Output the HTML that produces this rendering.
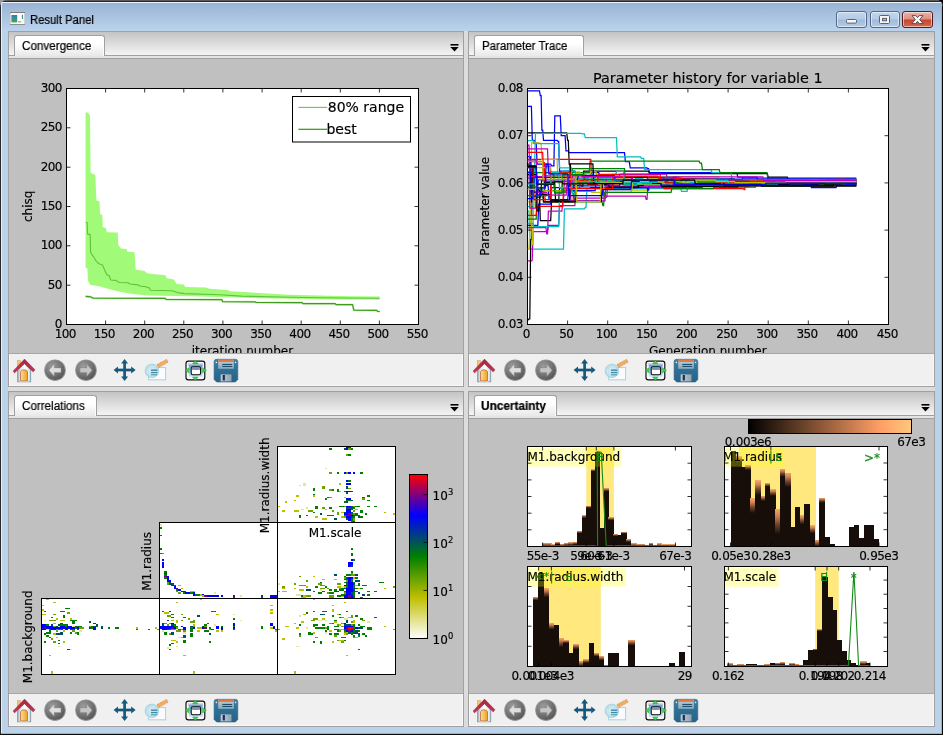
<!DOCTYPE html><html><head><meta charset="utf-8"><title>Result Panel</title><style>
html,body{margin:0;padding:0;background:#000;}
body{width:943px;height:735px;overflow:hidden;position:relative;font-family:"Liberation Sans",sans-serif;}
#win{position:absolute;left:0;top:0;width:943px;height:735px;box-sizing:border-box;
 background:linear-gradient(#97b2d3 0px,#99b4d4 3px,#bad2ec 30px,#bbd2ea 34px,#bbd2ea 100%);
 border-radius:7px 7px 0 0;overflow:hidden;}
#win .edge{position:absolute;}
.pane{position:absolute;box-sizing:border-box;border:1px solid #a0a0a0;background:#c0c0c0;overflow:hidden;}
.tabbar{position:absolute;left:0;top:0;right:0;height:23px;background:linear-gradient(#c4c4c4,#dcdcdc 50%,#f4f4f4);border-bottom:1px solid #a0a0a0;}
.strip{position:absolute;left:0;right:0;top:24px;height:2px;background:#e4e4e4;border-bottom:1px solid #a0a0a0;}
.tab{position:absolute;left:5px;top:3px;height:21px;box-sizing:border-box;border:1px solid #a0a0a0;border-bottom:none;border-radius:3px 3px 0 0;
 background:linear-gradient(#ffffff 0%,#ffffff 40%,#e8e8e8 100%);box-shadow:inset -1px 0 0 rgba(255,255,255,.8);font-size:12px;line-height:12px;color:#000;white-space:nowrap;}
.tab span{position:absolute;left:8px;top:4px;display:inline-block;transform-origin:0 50%;}
.dd{position:absolute;right:4px;top:12px;width:9px;height:8px;}
.tb{position:absolute;left:0;right:0;bottom:0;height:32px;background:#f0f0f0;border-top:1px solid #a6a6a6;box-shadow:inset -1px -1px 0 #f9f9f9,inset 1px 0 0 #f9f9f9;}
.cv{position:absolute;left:0;top:27px;will-change:transform;}
.tab span,#title{will-change:transform;-webkit-text-stroke:0.22px #000;}
svg text{font-family:"DejaVu Sans","Liberation Sans",sans-serif;stroke:#000;stroke-width:0.16px;}
svg text.g{stroke:#138c13;}
#title{position:absolute;left:30px;top:13px;transform:scaleX(0.94);font-size:12px;line-height:14px;color:#000;white-space:nowrap;transform-origin:0 50%;}
.cbtn{position:absolute;top:11px;height:17px;box-sizing:border-box;border:1px solid #56688a;border-radius:3px;
 box-shadow:inset 0 0 0 1px rgba(255,255,255,.55);}
</style></head><body>
<svg width="0" height="0" style="position:absolute"><defs>
<radialGradient id="gball" cx="0.36" cy="0.3" r="0.8"><stop offset="0" stop-color="#9b9b9b"/><stop offset="0.5" stop-color="#787878"/><stop offset="1" stop-color="#505050"/></radialGradient>
<linearGradient id="gdoor" x1="0" y1="0" x2="1" y2="0"><stop offset="0" stop-color="#fde08a"/><stop offset="1" stop-color="#eba127"/></linearGradient>
<linearGradient id="groof" x1="0" y1="0" x2="0" y2="1"><stop offset="0" stop-color="#a8243f"/><stop offset="1" stop-color="#c03a55"/></linearGradient>
<linearGradient id="gwall" x1="0" y1="0" x2="1" y2="0"><stop offset="0" stop-color="#a9b5bb"/><stop offset="0.3" stop-color="#e4e9eb"/><stop offset="0.55" stop-color="#ffffff"/><stop offset="1" stop-color="#d3dadd"/></linearGradient>
<linearGradient id="gsub" x1="0" y1="0" x2="0" y2="1"><stop offset="0" stop-color="#5f9fe6"/><stop offset="1" stop-color="#c4e2f8"/></linearGradient>
<linearGradient id="gsave" x1="0" y1="0" x2="0" y2="1"><stop offset="0" stop-color="#3f81a6"/><stop offset="0.45" stop-color="#2f6f95"/><stop offset="1" stop-color="#286288"/></linearGradient>
<linearGradient id="gslab" x1="0" y1="0" x2="0" y2="1"><stop offset="0" stop-color="#c3d0d6"/><stop offset="1" stop-color="#86a9bb"/></linearGradient>
<radialGradient id="gmag" cx="0.5" cy="0.5" r="0.5"><stop offset="0" stop-color="#d9eef5" stop-opacity="0.9"/><stop offset="0.7" stop-color="#c3e3ee" stop-opacity="0.88"/><stop offset="1" stop-color="#a2d2e0" stop-opacity="0.9"/></radialGradient>
<linearGradient id="gshut" x1="0" y1="0" x2="1" y2="0"><stop offset="0" stop-color="#c4ccd2"/><stop offset="1" stop-color="#8fa3b0"/></linearGradient>
</defs></svg>
<div style="position:absolute;left:0;top:0;width:5px;height:5px;background:#9c9c9c"></div>
<div id="win">
<div class="edge" style="left:0;top:0;width:943px;height:1px;background:#5c5c5c"></div>
<div class="edge" style="left:0;top:1px;width:943px;height:1px;background:#262626"></div>
<div class="edge" style="left:1px;top:2px;width:941px;height:1px;background:#eef4fb"></div>
<div class="edge" style="left:0;top:0;width:1px;height:735px;background:#2a2a2a"></div>
<div class="edge" style="left:1px;top:2px;width:1px;height:731px;background:#e4eefa"></div>
<div class="edge" style="left:941px;top:6px;width:1px;height:728px;background:#36d6f5"></div>
<div class="edge" style="left:942px;top:0;width:1px;height:735px;background:#0a0a0a"></div>
<div class="edge" style="left:1px;top:733px;width:941px;height:1px;background:#36d6f5"></div>
<div class="edge" style="left:0;top:734px;width:943px;height:1px;background:#0a0a0a"></div>
<svg style="position:absolute;left:10px;top:12px" width="15" height="13" viewBox="0 0 15 13">
<defs><linearGradient id="icg" x1="0" y1="0" x2="0" y2="1"><stop offset="0" stop-color="#3a78c2"/><stop offset="0.45" stop-color="#36928f"/><stop offset="1" stop-color="#37a85a"/></linearGradient></defs>
<rect x="0" y="0" width="15" height="13" fill="#fbfbfb"/>
<rect x="0" y="0" width="15" height="1" fill="#7c7c7c"/><rect x="0" y="12" width="15" height="1" fill="#8e8e8e"/>
<rect x="0" y="1" width="0.8" height="11" fill="#c9c9c9"/><rect x="14.2" y="1" width="0.8" height="11" fill="#c9c9c9"/>
<rect x="1.4" y="3" width="5.8" height="7.4" fill="url(#icg)"/><rect x="8" y="9" width="3.2" height="1.5" fill="#b3b3b3"/><rect x="11.9" y="2.8" width="1.1" height="4.2" fill="url(#icg)"/></svg>
<div id="title">Result Panel</div>
<div class="cbtn" style="left:836px;width:31px;background:linear-gradient(#c3d6ec 0%,#b4cbe6 48%,#9fbbdb 52%,#b3cae5 100%)"></div>
<div class="cbtn" style="left:870px;width:30px;background:linear-gradient(#c3d6ec 0%,#b4cbe6 48%,#9fbbdb 52%,#b3cae5 100%)"></div>
<div class="cbtn" style="left:902px;width:31px;border-color:#541a1f;background:linear-gradient(#eab3a5 0%,#dd8f7e 48%,#c6452a 52%,#d4694c 100%)"></div>
<svg style="position:absolute;left:836px;top:11px" width="97" height="17" viewBox="0 0 97 17">
<rect x="10.5" y="8.5" width="10" height="3.6" rx="1" fill="#f7f7f7" stroke="#5a6373" stroke-width="1"/>
<rect x="43.5" y="4.5" width="10" height="8" rx="1" fill="#f7f7f7" stroke="#5a6373" stroke-width="1"/>
<rect x="46.5" y="7.4" width="4" height="2.4" fill="#9fb6d4" stroke="#5a6373" stroke-width="1"/>
<path d="M76.0 4.6 L79.8 4.6 L81.5 6.7 L83.2 4.6 L87.0 4.6 L83.6 8.5 L87.2 12.6 L83.3 12.6 L81.5 10.4 L79.7 12.6 L75.8 12.6 L79.4 8.5 Z" fill="#fbfbfb" stroke="#5b3d42" stroke-width="0.9" stroke-linejoin="round"/>
</svg>
<div class="edge" style="left:464px;top:31px;width:4px;height:696px;background:#dcdcdc"></div>
<div class="edge" style="left:8px;top:387px;width:927px;height:4px;background:#dcdcdc"></div>
<div class="pane" style="left:8px;top:31px;width:456px;height:356px">
<div class="tabbar"></div><div class="strip"></div>
<div class="tab" style="width:91px"><span style="left:7.3px;transform:scaleX(0.972)">Convergence</span></div>
<svg class="dd" viewBox="0 0 9 8"><rect x="0.5" y="0" width="8" height="1.6" fill="#000"/><path d="M0.3 3 L8.7 3 L4.5 7.4 Z" fill="#000"/></svg>
<div class="cv" style="width:454px;height:295px"><svg width="454" height="294" viewBox="0 0 454 294" style="position:absolute;left:0;top:0;display:block" shape-rendering="auto"><g transform="translate(-9,-59)"><rect x="66.5" y="88.5" width="352.0" height="236.0" fill="#fff" stroke="#000" stroke-width="1"/><polygon points="85.6,112.6 87.0,112.2 88.4,113.6 90.0,115.4 90.6,172.7 95.3,174.9 96.4,200.4 99.4,201.0 100.2,214.2 102.4,215.0 102.8,226.9 105.9,228.0 106.8,232.3 117.7,232.6 118.3,244.9 121.1,248.6 126.6,248.9 127.1,251.6 134.6,252.3 135.6,269.5 144.3,271.0 147.3,273.3 156.2,274.4 165.0,275.0 166.8,278.2 173.9,279.4 176.7,284.0 183.8,284.4 185.2,286.9 205.8,287.6 209.3,288.8 227.0,289.9 230.5,291.2 248.2,292.3 262.4,293.3 290.0,294.7 320.0,295.6 350.0,296.2 379.6,296.5 379.6,299.8 350.0,299.5 320.0,299.2 290.0,298.8 262.0,298.2 227.0,297.2 191.6,296.2 160.0,295.7 144.3,295.3 129.3,293.5 117.4,291.2 106.2,288.2 97.9,286.0 90.5,284.9 87.9,280.7 87.4,268.6 85.6,267.8" fill="#a1fb79"/><polyline points="85.8,222.4 87.2,222.8 87.6,234.1 90.2,234.6 90.6,252.3 92.7,255.6 94.2,257.7 96.4,261.6 99.6,264.0 102.4,265.0 104.0,268.4 105.4,271.8 106.9,274.8 109.2,275.8 110.7,280.0 115.9,280.4 119.2,282.5 127.9,282.8 130.1,284.0 138.3,284.9 139.8,286.0 145.8,286.7 149.4,288.0 150.5,290.2 172.1,290.8 177.4,292.6 184.5,293.6 219.9,294.8 241.2,296.1 290.0,297.2 340.0,298.0 379.6,298.3" fill="none" stroke="#5fc33a" stroke-width="1.1" stroke-linejoin="round"/><polyline points="85.6,296.3 90.5,296.8 92.8,298.1 165.0,298.3 166.2,299.5 221.7,299.6 222.8,301.6 255.3,301.9 256.0,302.5 302.2,302.7 303.0,303.6 335.2,303.7 336.0,304.6 352.6,304.7 353.8,310.1 376.6,310.3 377.6,311.4 379.8,311.5" fill="none" stroke="#a4e487" stroke-width="2.4" stroke-linejoin="round" opacity="0.55"/><polyline points="85.6,296.3 90.5,296.8 92.8,298.1 165.0,298.3 166.2,299.5 221.7,299.6 222.8,301.6 255.3,301.9 256.0,302.5 302.2,302.7 303.0,303.6 335.2,303.7 336.0,304.6 352.6,304.7 353.8,310.1 376.6,310.3 377.6,311.4 379.8,311.5" fill="none" stroke="#3d9c1c" stroke-width="1.2" stroke-linejoin="round"/><path d="M105.6 324.5 v-4 M105.6 88.5 v4 M144.7 324.5 v-4 M144.7 88.5 v4 M183.8 324.5 v-4 M183.8 88.5 v4 M222.9 324.5 v-4 M222.9 88.5 v4 M262.1 324.5 v-4 M262.1 88.5 v4 M301.2 324.5 v-4 M301.2 88.5 v4 M340.3 324.5 v-4 M340.3 88.5 v4 M379.4 324.5 v-4 M379.4 88.5 v4 " stroke="#000" stroke-width="0.8" fill="none"/><path d="M66.5 285.2 h4 M418.5 285.2 h-4 M66.5 245.8 h4 M418.5 245.8 h-4 M66.5 206.5 h4 M418.5 206.5 h-4 M66.5 167.2 h4 M418.5 167.2 h-4 M66.5 127.8 h4 M418.5 127.8 h-4 " stroke="#000" stroke-width="0.8" fill="none"/><text x="65.5" y="337.8" font-size="12" text-anchor="middle" fill="#000" dx="0 -0.63 -0.63">100</text><text x="104.6" y="337.8" font-size="12" text-anchor="middle" fill="#000" dx="0 -0.63 -0.63">150</text><text x="143.7" y="337.8" font-size="12" text-anchor="middle" fill="#000" dx="0 -0.63 -0.63">200</text><text x="182.8" y="337.8" font-size="12" text-anchor="middle" fill="#000" dx="0 -0.63 -0.63">250</text><text x="221.9" y="337.8" font-size="12" text-anchor="middle" fill="#000" dx="0 -0.63 -0.63">300</text><text x="261.1" y="337.8" font-size="12" text-anchor="middle" fill="#000" dx="0 -0.63 -0.63">350</text><text x="300.2" y="337.8" font-size="12" text-anchor="middle" fill="#000" dx="0 -0.63 -0.63">400</text><text x="339.3" y="337.8" font-size="12" text-anchor="middle" fill="#000" dx="0 -0.63 -0.63">450</text><text x="378.4" y="337.8" font-size="12" text-anchor="middle" fill="#000" dx="0 -0.63 -0.63">500</text><text x="417.5" y="337.8" font-size="12" text-anchor="middle" fill="#000" dx="0 -0.63 -0.63">550</text><text x="62.4" y="328.1" font-size="12" text-anchor="end" fill="#000" dx="0">0</text><text x="62.4" y="288.8" font-size="12" text-anchor="end" fill="#000" dx="0 -0.63">50</text><text x="62.4" y="249.4" font-size="12" text-anchor="end" fill="#000" dx="0 -0.63 -0.63">100</text><text x="62.4" y="210.1" font-size="12" text-anchor="end" fill="#000" dx="0 -0.63 -0.63">150</text><text x="62.4" y="170.8" font-size="12" text-anchor="end" fill="#000" dx="0 -0.63 -0.63">200</text><text x="62.4" y="131.4" font-size="12" text-anchor="end" fill="#000" dx="0 -0.63 -0.63">250</text><text x="62.4" y="92.1" font-size="12" text-anchor="end" fill="#000" dx="0 -0.63 -0.63">300</text><text transform="translate(32.3,206.3) rotate(-90)" font-size="12" text-anchor="middle" fill="#000">chisq</text><text x="242.4" y="355.4" font-size="12" text-anchor="middle" fill="#000" >iteration number</text><rect x="292.5" y="96.5" width="118" height="45.5" fill="#fff" stroke="#000" stroke-width="1"/><path d="M298.4 107.4 H327.2" stroke="#63cf2c" stroke-width="1.1"/><path d="M298.4 129.3 H327.2" stroke="#2f9907" stroke-width="1.2"/><text x="327.8" y="111.8" font-size="14" text-anchor="start" fill="#000" >80% range</text><text x="326.4" y="133.8" font-size="14" text-anchor="start" fill="#000" >best</text></g></svg></div>
<div class="tb"><svg width="250" height="32" viewBox="0 0 250 32" style="position:absolute;left:0;top:0">
<g transform="translate(3.0,4.399999999999999)">
<rect x="5.4" y="2.2" width="3.0" height="6" fill="#f7c75f" stroke="#d8a081" stroke-width="0.6"/>
<path d="M5.6 11 L12.4 4.6 L18.6 11 L18.6 23.4 L5.6 23.4 Z" fill="url(#gwall)" stroke="#8fa5ae" stroke-width="1.1"/>
<path d="M8.5 22.6 L8.5 13.4 Q8.7 11.4 12.0 11.4 Q15.3 11.4 15.5 13.4 L15.5 22.6 Z" fill="none" stroke="#ffffff" stroke-width="1.6"/>
<path d="M8.5 22.6 L8.5 13.4 Q8.7 11.4 12.0 11.4 Q15.3 11.4 15.5 13.4 L15.5 22.6 Z" fill="url(#gdoor)" stroke="#b8664a" stroke-width="0.8"/>
<path d="M1.1 12.5 L12.5 0.7 L23.0 11.4 L21.2 13.5 L12.5 5.3 L2.5 14.5 Z" fill="url(#groof)" stroke="#9a1f3c" stroke-width="0.4" stroke-linejoin="round"/>
</g>
<circle cx="46" cy="16.2" r="10.8" fill="#969696"/>
<circle cx="46" cy="16.2" r="9.9" fill="url(#gball)"/>
<path d="M51.90 13.90 L45.20 13.90 L45.20 10.20 L39.90 16.20 L45.20 22.20 L45.20 18.50 L51.90 18.50 Z" fill="#dedede" stroke="#8d8d8d" stroke-width="0.4" stroke-linejoin="round"/>
<circle cx="77" cy="16.2" r="10.8" fill="#969696"/>
<circle cx="77" cy="16.2" r="9.9" fill="url(#gball)"/>
<path d="M71.10 13.90 L77.80 13.90 L77.80 10.20 L83.10 16.20 L77.80 22.20 L77.80 18.50 L71.10 18.50 Z" fill="#c4c4c4" stroke="#8d8d8d" stroke-width="0.4" stroke-linejoin="round"/>
<rect x="108.5" y="14.65" width="14.2" height="2.7" fill="#15587c"/><rect x="114.25" y="8.9" width="2.7" height="14.2" fill="#15587c"/><path d="M126.6 16.0 L122.19999999999999 19.5 L122.19999999999999 12.5 Z" fill="#15587c"/><path d="M104.6 16.0 L109.0 12.5 L109.0 19.5 Z" fill="#15587c"/><path d="M115.6 27.0 L119.1 22.6 L112.1 22.6 Z" fill="#15587c"/><path d="M115.6 5.0 L112.1 9.4 L119.1 9.4 Z" fill="#15587c"/>
<g transform="translate(135,4.199999999999999)">
<rect x="4.6" y="9.4" width="17.0" height="12.2" fill="#fbfbff" stroke="#a3d4e0" stroke-width="1"/>
<path d="M12.9 6.4 L22.6 1.2 L24.2 3.9 L14.6 9.4 Z" fill="#f3ad62" stroke="#cf8a3d" stroke-width="0.7" stroke-linejoin="round" stroke-dasharray="1.2 0.6"/>
<circle cx="7.9" cy="12.7" r="6.8" fill="url(#gmag)" stroke="#a9d5e2" stroke-width="0.9"/>
<rect x="6.9" y="11.3" width="6.4" height="1.3" fill="#2f819c"/>
<rect x="6.9" y="13.7" width="6.4" height="1.3" fill="#3d8ca6"/>
<rect x="6.9" y="15.9" width="6.4" height="1.3" fill="#5ea3b9"/>
</g>
<g transform="translate(174.4,4.0)">
<rect x="2.6" y="3.1" width="18.8" height="18.8" rx="2.4" fill="#fafafa" stroke="#0c0c0c" stroke-width="1.15"/>
<rect x="4.4" y="5.0" width="15.2" height="3" fill="#bdbdbd" opacity="0.55"/>
<rect x="5.5" y="6.6" width="13.7" height="12.1" fill="url(#gsub)"/>
<rect x="7.8" y="8.9" width="9.4" height="7.9" rx="1.6" fill="#fdfdfd" stroke="#0c0c0c" stroke-width="1.1"/>
<rect x="8.5" y="9.5" width="8.0" height="2.4" fill="#8f8f8f"/>
<rect x="11.2" y="9.5" width="2.2" height="2.4" fill="#6f8fdc"/>
<path d="M11.9 2.3 L14.7 5.9 L9.1 5.9 Z" fill="#35d64a" stroke="#1f9a2c" stroke-width="0.4"/>
<path d="M11.9 22.6 L14.7 19.0 L9.1 19.0 Z" fill="#35d64a" stroke="#1f9a2c" stroke-width="0.4"/>
<path d="M1.9 12.3 L5.5 9.7 L5.5 14.9 Z" fill="#35d64a" stroke="#1f9a2c" stroke-width="0.4"/>
<path d="M23.1 12.3 L19.2 9.7 L19.2 14.9 Z" fill="#35d64a" stroke="#1f9a2c" stroke-width="0.4"/>
</g>
<g transform="translate(204.8,4.599999999999998)">
<path d="M2.8 0.7 L21.6 0.7 Q24.0 0.7 24.0 3.1 L24.0 20.9 L21.6 23.4 L2.8 23.4 L0.3 20.9 L0.3 3.1 Q0.3 0.7 2.8 0.7 Z" fill="url(#gsave)" stroke="#2b678c" stroke-width="0.6"/>
<rect x="4.4" y="1.2" width="15.6" height="9.0" fill="url(#gslab)"/>
<rect x="4.4" y="1.2" width="15.6" height="2.1" fill="#d97a49"/>
<rect x="8.5" y="5.3" width="9.9" height="1.1" fill="#1f4d6c"/>
<rect x="8.5" y="7.3" width="9.9" height="1.1" fill="#1f4d6c"/>
<rect x="1.9" y="3.2" width="1.3" height="1.3" fill="#eef4f8"/><rect x="21.1" y="3.2" width="1.3" height="1.3" fill="#eef4f8"/>
<rect x="6.9" y="15.8" width="10.8" height="7.0" fill="url(#gshut)"/>
<rect x="8.9" y="16.4" width="2.2" height="5.4" fill="#1b2c55"/>
</g>
</svg></div>
</div>
<div class="pane" style="left:468px;top:31px;width:467px;height:356px">
<div class="tabbar"></div><div class="strip"></div>
<div class="tab" style="width:110px"><span style="left:6.6px;transform:scaleX(0.955)">Parameter Trace</span></div>
<svg class="dd" viewBox="0 0 9 8"><rect x="0.5" y="0" width="8" height="1.6" fill="#000"/><path d="M0.3 3 L8.7 3 L4.5 7.4 Z" fill="#000"/></svg>
<div class="cv" style="width:465px;height:295px"><svg width="465" height="294" viewBox="0 0 465 294" style="position:absolute;left:0;top:0;display:block" shape-rendering="auto"><g transform="translate(-469,-59)"><rect x="527.5" y="88.5" width="361.0" height="236.0" fill="#fff" stroke="#000" stroke-width="1"/><clipPath id="tclip"><rect x="527.5" y="88.5" width="361.0" height="236.0"/></clipPath><g clip-path="url(#tclip)" fill="none" stroke-width="1.25" stroke-linejoin="miter"><polyline points="527.5,90.9 537.8,90.9 538.7,90.9 539.5,90.9 540.3,95.6 541.1,95.6 541.9,130.0 542.7,130.0 543.5,140.4 557.1,140.4 558.0,141.4 558.7,141.4 559.6,171.1 574.8,171.1 575.6,172.5 598.8,172.5 599.7,177.2 647.0,177.2 647.8,179.1 695.9,179.1 696.8,180.3 744.9,180.3 745.8,181.5 856.4,181.5" stroke="#0000ff"/><polyline points="527.5,106.4 529.8,106.4 530.7,106.4 531.4,106.4 532.3,140.4 534.6,140.4 535.5,142.8 536.2,142.8 537.1,164.0 550.7,164.0 551.6,165.9 553.9,165.9 554.8,115.9 558.7,115.9 559.6,115.9 560.3,115.9 561.2,135.7 565.1,135.7 566.0,150.8 568.3,150.8 569.2,152.7 621.3,152.7 622.2,152.7 624.5,152.7 625.4,161.7 629.3,161.7 630.2,167.8 647.0,167.8 647.8,168.7 648.6,168.7 649.4,172.5 735.2,172.5 736.1,172.5 736.8,172.5 737.7,177.2 756.9,177.2 757.7,180.1 856.4,180.1" stroke="#0000ff"/><polyline points="527.5,132.9 565.1,132.9 566.0,132.9 566.7,132.9 567.6,140.4 568.3,140.4 569.2,164.0 569.9,164.0 570.8,185.3 581.2,185.3 582.1,186.7 582.8,186.7 583.7,171.1 647.0,171.1 647.8,171.1 648.6,171.1 649.4,173.5 767.3,173.5 768.2,177.2 787.3,177.2 788.2,179.6 856.4,179.6" stroke="#000000"/><polyline points="527.5,206.5 533.0,206.5 533.9,206.5 533.8,206.5 534.7,164.0 534.6,164.0 535.5,133.3 581.2,133.3 582.1,133.8 584.4,133.8 585.3,137.6 614.9,137.6 615.7,137.6 616.5,137.6 617.3,156.9 640.5,156.9 641.4,158.4 643.7,158.4 644.6,169.7 711.1,169.7 712.0,172.5 731.2,172.5 732.1,181.0 856.4,181.0" stroke="#00bfbf"/><polyline points="527.5,178.2 531.4,178.2 532.3,172.5 589.2,172.5 590.1,161.2 699.1,161.2 700.0,163.1 701.5,163.1 702.4,169.7 719.2,169.7 720.0,172.5 767.0,172.5 767.9,179.1 856.4,179.1" stroke="#008000"/><polyline points="527.5,159.3 589.2,159.3 590.1,159.3 590.8,159.3 591.7,183.8 622.9,183.8 623.8,184.8 655.0,184.8 655.9,187.6 702.1,187.6 703.0,186.0 749.3,186.0 750.1,184.3 856.4,184.3" stroke="#ff0000"/><polyline points="527.5,211.2 529.0,211.2 529.9,249.0 561.9,249.0 562.8,249.0 563.5,249.0 564.4,208.9 584.4,208.9 585.3,207.4 586.0,207.4 586.9,188.6 679.0,188.6 679.9,187.6 680.6,187.6 681.5,191.4 687.1,191.4 687.9,184.8 717.2,184.8 718.1,183.8 856.4,183.8" stroke="#00bfbf"/><polyline points="527.5,260.8 531.4,260.8 532.3,260.8 532.2,260.8 533.1,231.5 545.9,231.5 546.8,231.5 547.5,231.5 548.4,225.4 558.7,225.4 559.6,205.6 574.8,205.6 575.6,198.0 605.2,198.0 606.1,197.1 606.8,197.1 607.7,186.7 685.4,186.7 686.3,185.7 764.0,185.7 764.9,184.8 856.4,184.8" stroke="#bf00bf"/><polyline points="527.5,319.8 528.2,319.8 529.1,318.8 529.8,318.8 530.7,239.5 531.4,239.5 532.3,168.7 533.0,168.7 533.9,187.6 537.8,187.6 538.7,190.0 539.5,190.0 540.3,220.7 549.1,220.7 550.0,220.7 550.7,220.7 551.6,200.8 558.7,200.8 559.6,187.6 636.9,187.6 637.8,185.3 715.0,185.3 715.9,182.9 856.4,182.9" stroke="#000000"/><polyline points="527.5,249.0 529.0,249.0 529.9,230.1 530.6,230.1 531.5,142.8 539.5,142.8 540.3,143.3 541.1,143.3 541.9,159.3 555.5,159.3 556.4,159.3 557.1,159.3 558.0,182.9 570.7,182.9 571.6,191.4 590.8,191.4 591.7,192.3 630.9,192.3 631.8,190.0 647.0,190.0 647.8,183.8 701.7,183.8 702.5,183.1 756.4,183.1 757.2,182.4 856.4,182.4" stroke="#bfbf00"/><polyline points="527.5,148.9 545.9,148.9 546.8,148.9 547.5,148.9 548.4,173.5 566.7,173.5 567.6,178.2 602.8,178.2 603.7,196.1 645.3,196.1 646.2,199.4 647.0,199.4 647.8,187.6 682.7,187.6 683.6,185.7 718.4,185.7 719.3,183.8 856.4,183.8" stroke="#bf00bf"/><polyline points="527.5,161.7 542.7,161.7 543.5,162.6 544.3,162.6 545.1,201.8 571.5,201.8 572.4,201.8 573.1,201.8 574.0,180.5 598.8,180.5 599.7,181.5 663.0,181.5 663.9,188.6 743.2,188.6 744.1,189.5 744.8,189.5 745.7,182.9 764.9,182.9 765.8,182.0 856.4,182.0" stroke="#ff0000"/><polyline points="527.5,187.6 542.7,187.6 543.5,201.8 602.0,201.8 602.9,205.6 603.6,205.6 604.5,192.3 671.0,192.3 671.9,188.6 713.2,188.6 714.1,187.1 755.4,187.1 756.3,185.7 856.4,185.7" stroke="#008000"/><polyline points="527.5,225.4 536.2,225.4 537.1,226.3 537.8,226.3 538.7,204.1 550.7,204.1 551.6,187.6 647.0,187.6 647.8,190.0 648.6,190.0 649.4,182.9 723.0,182.9 723.8,183.4 797.4,183.4 798.2,183.8 856.4,183.8" stroke="#0000ff"/><polyline points="527.5,201.8 529.8,201.8 530.7,215.9 531.4,215.9 532.3,244.3 533.0,244.3 533.9,194.7 550.7,194.7 551.6,173.5 562.7,173.5 563.6,174.4 564.3,174.4 565.2,192.3 574.8,192.3 575.6,193.3 576.4,193.3 577.2,182.9 650.2,182.9 651.1,183.8 724.0,183.8 724.9,184.8 856.4,184.8" stroke="#bfbf00"/><polyline points="527.5,164.0 529.8,164.0 530.7,182.9 530.6,182.9 531.5,201.8 531.4,201.8 532.3,166.4 533.0,166.4 533.9,192.3 542.7,192.3 543.5,201.8 574.8,201.8 575.6,182.9 622.9,182.9 623.8,177.2 678.6,177.2 679.5,179.1 734.4,179.1 735.3,181.0 856.4,181.0" stroke="#000000"/><polyline points="527.5,227.7 544.3,227.7 545.1,227.7 545.9,227.7 546.8,233.9 547.5,233.9 548.4,211.2 561.9,211.2 562.8,201.8 563.5,201.8 564.4,179.1 630.9,179.1 631.8,178.2 632.5,178.2 633.4,183.8 704.5,183.8 705.4,183.6 776.6,183.6 777.4,183.4 856.4,183.4" stroke="#bf00bf"/><polyline points="527.5,156.5 530.6,156.5 531.5,191.0 533.1,191.0 534.0,192.0 543.4,192.0 544.3,185.6 548.1,185.6 549.0,199.5 567.8,199.5 568.6,185.8 619.3,185.8 620.2,183.6 650.8,183.6 651.7,183.9 705.9,183.9 706.8,182.7 774.8,182.7 775.6,182.5 783.4,182.5 784.2,184.3 818.7,184.3 819.5,183.5 856.4,183.5" stroke="#0000ff"/><polyline points="527.5,219.0 536.2,219.0 537.1,188.4 543.3,188.4 544.2,190.6 571.5,190.6 572.4,168.7 624.5,168.7 625.4,182.4 656.8,182.4 657.7,179.9 679.5,179.9 680.4,180.7 696.1,180.7 697.0,184.3 740.4,184.3 741.3,182.0 771.4,182.0 772.3,182.7 785.6,182.7 786.5,182.6 821.1,182.6 822.0,183.2 856.4,183.2" stroke="#008000"/><polyline points="527.5,152.3 542.7,152.3 543.5,175.8 584.8,175.8 585.7,177.3 623.4,177.3 624.3,183.2 636.3,183.2 637.1,184.1 656.8,184.1 657.7,182.7 662.5,182.7 663.4,178.7 685.7,178.7 686.6,184.4 749.6,184.4 750.4,181.4 829.4,181.4 830.3,181.5 856.4,181.5" stroke="#ff0000"/><polyline points="527.5,223.3 533.0,223.3 533.9,226.7 558.7,226.7 559.6,192.8 561.9,192.8 562.8,171.2 575.1,171.2 576.0,187.4 589.5,187.4 590.4,174.6 593.5,174.6 594.4,180.0 634.3,180.0 635.2,178.7 642.8,178.7 643.7,185.3 664.1,185.3 664.9,178.3 669.9,178.3 670.8,180.0 685.9,180.0 686.8,179.5 696.5,179.5 697.4,179.7 714.3,179.7 715.1,183.3 785.2,183.3 786.1,181.8 820.7,181.8 821.6,180.4 837.0,180.4 837.9,180.5 856.4,180.5" stroke="#00bfbf"/><polyline points="527.5,172.2 529.0,172.2 529.9,208.0 535.6,208.0 536.5,179.5 542.6,179.5 543.5,166.2 550.1,166.2 551.0,181.3 570.1,181.3 570.9,200.8 605.0,200.8 605.9,186.1 670.5,186.1 671.4,184.2 730.5,184.2 731.4,181.8 805.6,181.8 806.4,179.5 856.4,179.5" stroke="#bf00bf"/><polyline points="527.5,167.7 550.7,167.7 551.6,176.6 562.7,176.6 563.6,189.6 576.0,189.6 576.8,171.8 579.6,171.8 580.5,174.3 585.8,174.3 586.7,176.4 592.3,176.4 593.2,178.7 596.3,178.7 597.2,181.2 600.5,181.2 601.4,179.0 628.8,179.0 629.7,179.5 642.1,179.5 643.0,179.4 677.4,179.4 678.2,176.9 718.5,176.9 719.4,179.9 747.4,179.9 748.2,179.8 768.5,179.8 769.4,179.6 824.8,179.6 825.7,180.7 856.4,180.7" stroke="#bfbf00"/><polyline points="527.5,174.7 536.2,174.7 537.1,197.1 540.7,197.1 541.5,180.8 543.4,180.8 544.3,182.5 554.7,182.5 555.6,201.4 601.4,201.4 602.2,184.5 608.5,184.5 609.4,187.1 638.2,187.1 639.1,185.1 643.4,185.1 644.3,179.6 723.3,179.6 724.1,185.9 833.1,185.9 834.0,183.0 843.2,183.0 844.0,182.8 856.4,182.8" stroke="#000000"/><polyline points="527.5,198.5 533.0,198.5 533.9,177.4 571.5,177.4 572.4,190.5 595.1,190.5 596.0,182.3 656.8,182.3 657.7,179.2 741.8,179.2 742.7,178.2 856.4,178.2" stroke="#0000ff"/><polyline points="527.5,186.8 536.2,186.8 537.1,184.4 553.9,184.4 554.8,192.0 566.2,192.0 567.1,185.0 569.6,185.0 570.5,182.0 621.9,182.0 622.8,184.1 669.8,184.1 670.6,182.3 709.7,182.3 710.5,182.2 779.5,182.2 780.4,184.0 802.8,184.0 803.7,182.7 818.3,182.7 819.2,183.9 828.0,183.9 828.9,183.6 844.6,183.6 845.4,183.0 856.4,183.0" stroke="#008000"/><polyline points="527.5,215.3 536.2,215.3 537.1,206.4 562.7,206.4 563.6,188.6 612.4,188.6 613.2,176.2 657.9,176.2 658.7,179.3 714.7,179.3 715.6,179.9 821.4,179.9 822.3,180.1 856.4,180.1" stroke="#ff0000"/><polyline points="527.5,140.6 533.0,140.6 533.9,143.5 558.7,143.5 559.6,167.8 571.5,167.8 572.4,194.2 575.1,194.2 576.0,178.2 611.3,178.2 612.1,174.3 615.8,174.3 616.7,171.3 623.5,171.3 624.4,184.1 671.8,184.1 672.7,182.1 681.8,182.1 682.7,182.7 707.0,182.7 707.9,182.3 776.2,182.3 777.0,180.5 833.8,180.5 834.7,181.3 856.4,181.3" stroke="#00bfbf"/><polyline points="527.5,145.2 529.0,145.2 529.9,176.6 545.5,176.6 546.4,181.4 588.6,181.4 589.5,184.6 595.2,184.6 596.1,179.7 606.2,179.7 607.1,184.0 613.6,184.0 614.4,182.1 644.1,182.1 645.0,179.6 658.3,179.6 659.2,181.5 667.8,181.5 668.7,179.4 673.8,179.4 674.7,180.0 698.1,180.0 699.0,182.1 765.1,182.1 765.9,183.5 798.5,183.5 799.4,182.5 856.4,182.5" stroke="#bf00bf"/><polyline points="527.5,161.1 542.7,161.1 543.5,190.9 561.4,190.9 562.3,171.5 566.8,171.5 567.7,181.1 589.6,181.1 590.5,171.9 596.2,171.9 597.1,182.1 603.1,182.1 604.0,189.5 631.9,189.5 632.8,181.5 637.0,181.5 637.9,183.8 671.4,183.8 672.3,180.4 695.5,180.4 696.4,182.1 739.7,182.1 740.6,182.8 747.4,182.8 748.3,182.3 856.4,182.3" stroke="#bfbf00"/><polyline points="527.5,165.8 536.2,165.8 537.1,210.9 538.9,210.9 539.8,194.6 549.7,194.6 550.6,200.1 569.6,200.1 570.5,163.9 592.9,163.9 593.7,183.0 619.9,183.0 620.8,181.7 651.5,181.7 652.4,183.4 660.8,183.4 661.6,186.5 718.4,186.5 719.2,186.9 737.6,186.9 738.4,184.7 788.8,184.7 789.6,183.8 824.6,183.8 825.5,184.8 841.0,184.8 841.9,185.2 856.4,185.2" stroke="#000000"/><polyline points="527.5,172.3 530.6,172.3 531.5,196.4 537.3,196.4 538.2,179.5 577.4,179.5 578.3,175.3 614.2,175.3 615.1,179.9 660.2,179.9 661.0,185.0 669.7,185.0 670.6,185.3 693.7,185.3 694.5,183.7 720.0,183.7 720.9,181.3 749.0,181.3 749.8,183.5 762.2,183.5 763.1,183.0 776.1,183.0 777.0,185.4 810.6,185.4 811.5,187.7 836.0,187.7 836.9,185.3 846.1,185.3 847.0,184.0 856.4,184.0" stroke="#0000ff"/><polyline points="527.5,195.7 550.7,195.7 551.6,174.1 553.7,174.1 554.6,193.2 561.9,193.2 562.8,174.6 583.8,174.6 584.7,179.6 641.4,179.6 642.3,182.9 650.2,182.9 651.1,181.6 664.9,181.6 665.7,182.8 680.5,182.8 681.4,179.9 697.2,179.9 698.0,182.0 797.2,182.0 798.1,181.8 856.4,181.8" stroke="#008000"/><polyline points="527.5,166.7 533.0,166.7 533.9,199.6 550.1,199.6 551.0,172.2 570.1,172.2 571.0,188.4 579.4,188.4 580.3,180.7 583.2,180.7 584.0,179.6 587.0,179.6 587.9,184.6 597.4,184.6 598.3,174.3 660.1,174.3 661.0,182.0 675.4,182.0 676.3,178.0 681.5,178.0 682.4,179.3 698.3,179.3 699.1,179.9 716.1,179.9 717.0,182.0 763.7,182.0 764.6,183.1 819.3,183.1 820.2,179.8 835.5,179.8 836.4,179.3 845.7,179.3 846.5,180.5 856.4,180.5" stroke="#ff0000"/><polyline points="527.5,183.9 550.7,183.9 551.6,172.5 558.7,172.5 559.6,187.5 571.5,187.5 572.4,181.5 595.1,181.5 596.0,182.3 656.8,182.3 657.7,181.8 662.5,181.8 663.4,179.9 668.3,179.9 669.2,180.4 727.8,180.4 728.7,183.8 777.4,183.8 778.3,180.5 812.1,180.5 813.0,180.4 856.4,180.4" stroke="#00bfbf"/><polyline points="527.5,159.8 536.2,159.8 537.1,192.7 546.8,192.7 547.7,195.1 566.2,195.1 567.1,183.2 571.9,183.2 572.8,175.6 581.3,175.6 582.2,176.5 619.1,176.5 620.0,174.1 666.3,174.1 667.2,177.3 672.2,177.3 673.1,176.8 762.9,176.8 763.7,180.6 846.0,180.6 846.9,180.6 856.4,180.6" stroke="#bf00bf"/><polyline points="527.5,189.4 536.2,189.4 537.1,179.2 576.0,179.2 576.8,201.6 600.2,201.6 601.1,182.1 607.3,182.1 608.2,182.1 614.7,182.1 615.6,182.7 622.4,182.7 623.2,181.7 635.2,181.7 636.0,181.4 648.8,181.4 649.7,178.8 657.9,178.8 658.8,182.1 663.6,182.1 664.5,180.0 679.1,180.0 680.0,182.0 689.5,182.0 690.4,180.1 715.4,180.1 716.3,181.6 734.4,181.6 735.3,182.5 785.1,182.5 786.0,181.7 856.4,181.7" stroke="#bfbf00"/><polyline points="527.5,166.3 536.2,166.3 537.1,184.0 553.9,184.0 554.8,181.9 562.1,181.9 563.0,183.8 595.1,183.8 596.0,183.6 622.5,183.6 623.4,180.0 694.6,180.0 695.5,184.4 760.7,184.4 761.5,186.0 856.4,186.0" stroke="#000000"/><polyline points="527.5,167.6 536.2,167.6 537.1,194.9 540.7,194.9 541.5,187.8 545.3,187.8 546.1,164.2 548.1,164.2 549.0,173.8 567.8,173.8 568.6,195.7 602.1,195.7 603.0,189.7 630.7,189.7 631.6,181.3 639.1,181.3 640.0,179.6 673.9,179.6 674.8,184.8 765.2,184.8 766.1,183.2 856.4,183.2" stroke="#0000ff"/></g><path d="M567.6 324.5 v-4 M567.6 88.5 v4 M607.7 324.5 v-4 M607.7 88.5 v4 M647.8 324.5 v-4 M647.8 88.5 v4 M687.9 324.5 v-4 M687.9 88.5 v4 M728.1 324.5 v-4 M728.1 88.5 v4 M768.2 324.5 v-4 M768.2 88.5 v4 M808.3 324.5 v-4 M808.3 88.5 v4 M848.4 324.5 v-4 M848.4 88.5 v4 " stroke="#000" stroke-width="0.8" fill="none"/><path d="M527.5 277.3 h4 M888.5 277.3 h-4 M527.5 230.1 h4 M888.5 230.1 h-4 M527.5 182.9 h4 M888.5 182.9 h-4 M527.5 135.7 h4 M888.5 135.7 h-4 " stroke="#000" stroke-width="0.8" fill="none"/><text x="526.5" y="337.8" font-size="12" text-anchor="middle" fill="#000" dx="0">0</text><text x="566.6" y="337.8" font-size="12" text-anchor="middle" fill="#000" dx="0 -0.63">50</text><text x="606.7" y="337.8" font-size="12" text-anchor="middle" fill="#000" dx="0 -0.63 -0.63">100</text><text x="646.8" y="337.8" font-size="12" text-anchor="middle" fill="#000" dx="0 -0.63 -0.63">150</text><text x="686.9" y="337.8" font-size="12" text-anchor="middle" fill="#000" dx="0 -0.63 -0.63">200</text><text x="727.1" y="337.8" font-size="12" text-anchor="middle" fill="#000" dx="0 -0.63 -0.63">250</text><text x="767.2" y="337.8" font-size="12" text-anchor="middle" fill="#000" dx="0 -0.63 -0.63">300</text><text x="807.3" y="337.8" font-size="12" text-anchor="middle" fill="#000" dx="0 -0.63 -0.63">350</text><text x="847.4" y="337.8" font-size="12" text-anchor="middle" fill="#000" dx="0 -0.63 -0.63">400</text><text x="887.5" y="337.8" font-size="12" text-anchor="middle" fill="#000" dx="0 -0.63 -0.63">450</text><text x="523.4" y="328.1" font-size="12" text-anchor="end" fill="#000" dx="0 -0.63 0.19 -0.63">0.03</text><text x="523.4" y="280.9" font-size="12" text-anchor="end" fill="#000" dx="0 -0.63 0.19 -0.63">0.04</text><text x="523.4" y="233.7" font-size="12" text-anchor="end" fill="#000" dx="0 -0.63 0.19 -0.63">0.05</text><text x="523.4" y="186.5" font-size="12" text-anchor="end" fill="#000" dx="0 -0.63 0.19 -0.63">0.06</text><text x="523.4" y="139.3" font-size="12" text-anchor="end" fill="#000" dx="0 -0.63 0.19 -0.63">0.07</text><text x="523.4" y="92.1" font-size="12" text-anchor="end" fill="#000" dx="0 -0.63 0.19 -0.63">0.08</text><text transform="translate(489.3,206.3) rotate(-90)" font-size="12" text-anchor="middle" fill="#000">Parameter value</text><text x="707.8" y="355.4" font-size="12" text-anchor="middle" fill="#000" >Generation number</text><text x="707.8" y="83.3" font-size="14.4" text-anchor="middle" fill="#000" >Parameter history for variable 1</text></g></svg></div>
<div class="tb"><svg width="250" height="32" viewBox="0 0 250 32" style="position:absolute;left:0;top:0">
<g transform="translate(3.0,4.399999999999999)">
<rect x="5.4" y="2.2" width="3.0" height="6" fill="#f7c75f" stroke="#d8a081" stroke-width="0.6"/>
<path d="M5.6 11 L12.4 4.6 L18.6 11 L18.6 23.4 L5.6 23.4 Z" fill="url(#gwall)" stroke="#8fa5ae" stroke-width="1.1"/>
<path d="M8.5 22.6 L8.5 13.4 Q8.7 11.4 12.0 11.4 Q15.3 11.4 15.5 13.4 L15.5 22.6 Z" fill="none" stroke="#ffffff" stroke-width="1.6"/>
<path d="M8.5 22.6 L8.5 13.4 Q8.7 11.4 12.0 11.4 Q15.3 11.4 15.5 13.4 L15.5 22.6 Z" fill="url(#gdoor)" stroke="#b8664a" stroke-width="0.8"/>
<path d="M1.1 12.5 L12.5 0.7 L23.0 11.4 L21.2 13.5 L12.5 5.3 L2.5 14.5 Z" fill="url(#groof)" stroke="#9a1f3c" stroke-width="0.4" stroke-linejoin="round"/>
</g>
<circle cx="46" cy="16.2" r="10.8" fill="#969696"/>
<circle cx="46" cy="16.2" r="9.9" fill="url(#gball)"/>
<path d="M51.90 13.90 L45.20 13.90 L45.20 10.20 L39.90 16.20 L45.20 22.20 L45.20 18.50 L51.90 18.50 Z" fill="#dedede" stroke="#8d8d8d" stroke-width="0.4" stroke-linejoin="round"/>
<circle cx="77" cy="16.2" r="10.8" fill="#969696"/>
<circle cx="77" cy="16.2" r="9.9" fill="url(#gball)"/>
<path d="M71.10 13.90 L77.80 13.90 L77.80 10.20 L83.10 16.20 L77.80 22.20 L77.80 18.50 L71.10 18.50 Z" fill="#c4c4c4" stroke="#8d8d8d" stroke-width="0.4" stroke-linejoin="round"/>
<rect x="108.5" y="14.65" width="14.2" height="2.7" fill="#15587c"/><rect x="114.25" y="8.9" width="2.7" height="14.2" fill="#15587c"/><path d="M126.6 16.0 L122.19999999999999 19.5 L122.19999999999999 12.5 Z" fill="#15587c"/><path d="M104.6 16.0 L109.0 12.5 L109.0 19.5 Z" fill="#15587c"/><path d="M115.6 27.0 L119.1 22.6 L112.1 22.6 Z" fill="#15587c"/><path d="M115.6 5.0 L112.1 9.4 L119.1 9.4 Z" fill="#15587c"/>
<g transform="translate(135,4.199999999999999)">
<rect x="4.6" y="9.4" width="17.0" height="12.2" fill="#fbfbff" stroke="#a3d4e0" stroke-width="1"/>
<path d="M12.9 6.4 L22.6 1.2 L24.2 3.9 L14.6 9.4 Z" fill="#f3ad62" stroke="#cf8a3d" stroke-width="0.7" stroke-linejoin="round" stroke-dasharray="1.2 0.6"/>
<circle cx="7.9" cy="12.7" r="6.8" fill="url(#gmag)" stroke="#a9d5e2" stroke-width="0.9"/>
<rect x="6.9" y="11.3" width="6.4" height="1.3" fill="#2f819c"/>
<rect x="6.9" y="13.7" width="6.4" height="1.3" fill="#3d8ca6"/>
<rect x="6.9" y="15.9" width="6.4" height="1.3" fill="#5ea3b9"/>
</g>
<g transform="translate(174.4,4.0)">
<rect x="2.6" y="3.1" width="18.8" height="18.8" rx="2.4" fill="#fafafa" stroke="#0c0c0c" stroke-width="1.15"/>
<rect x="4.4" y="5.0" width="15.2" height="3" fill="#bdbdbd" opacity="0.55"/>
<rect x="5.5" y="6.6" width="13.7" height="12.1" fill="url(#gsub)"/>
<rect x="7.8" y="8.9" width="9.4" height="7.9" rx="1.6" fill="#fdfdfd" stroke="#0c0c0c" stroke-width="1.1"/>
<rect x="8.5" y="9.5" width="8.0" height="2.4" fill="#8f8f8f"/>
<rect x="11.2" y="9.5" width="2.2" height="2.4" fill="#6f8fdc"/>
<path d="M11.9 2.3 L14.7 5.9 L9.1 5.9 Z" fill="#35d64a" stroke="#1f9a2c" stroke-width="0.4"/>
<path d="M11.9 22.6 L14.7 19.0 L9.1 19.0 Z" fill="#35d64a" stroke="#1f9a2c" stroke-width="0.4"/>
<path d="M1.9 12.3 L5.5 9.7 L5.5 14.9 Z" fill="#35d64a" stroke="#1f9a2c" stroke-width="0.4"/>
<path d="M23.1 12.3 L19.2 9.7 L19.2 14.9 Z" fill="#35d64a" stroke="#1f9a2c" stroke-width="0.4"/>
</g>
<g transform="translate(204.8,4.599999999999998)">
<path d="M2.8 0.7 L21.6 0.7 Q24.0 0.7 24.0 3.1 L24.0 20.9 L21.6 23.4 L2.8 23.4 L0.3 20.9 L0.3 3.1 Q0.3 0.7 2.8 0.7 Z" fill="url(#gsave)" stroke="#2b678c" stroke-width="0.6"/>
<rect x="4.4" y="1.2" width="15.6" height="9.0" fill="url(#gslab)"/>
<rect x="4.4" y="1.2" width="15.6" height="2.1" fill="#d97a49"/>
<rect x="8.5" y="5.3" width="9.9" height="1.1" fill="#1f4d6c"/>
<rect x="8.5" y="7.3" width="9.9" height="1.1" fill="#1f4d6c"/>
<rect x="1.9" y="3.2" width="1.3" height="1.3" fill="#eef4f8"/><rect x="21.1" y="3.2" width="1.3" height="1.3" fill="#eef4f8"/>
<rect x="6.9" y="15.8" width="10.8" height="7.0" fill="url(#gshut)"/>
<rect x="8.9" y="16.4" width="2.2" height="5.4" fill="#1b2c55"/>
</g>
</svg></div>
</div>
<div class="pane" style="left:8px;top:391px;width:456px;height:336px">
<div class="tabbar"></div><div class="strip"></div>
<div class="tab" style="width:83px"><span style="left:7.1px;transform:scaleX(0.97)">Correlations</span></div>
<svg class="dd" viewBox="0 0 9 8"><rect x="0.5" y="0" width="8" height="1.6" fill="#000"/><path d="M0.3 3 L8.7 3 L4.5 7.4 Z" fill="#000"/></svg>
<div class="cv" style="width:454px;height:275px"><svg width="454" height="274" viewBox="0 0 454 274" style="position:absolute;left:0;top:0;display:block" shape-rendering="auto"><g transform="translate(-9,-419)"><rect x="277.5" y="446.5" width="118" height="76" fill="#fff"/><g shape-rendering="crispEdges"><rect x="324.70" y="467.78" width="2.41" height="1.57" fill="#e6e699"/><rect x="298.74" y="484.50" width="2.41" height="1.57" fill="#e6e699"/><rect x="303.46" y="482.98" width="2.41" height="1.57" fill="#e6e699"/><rect x="303.46" y="484.50" width="2.41" height="1.57" fill="#e6e699"/><rect x="312.90" y="487.54" width="2.41" height="1.57" fill="#008000"/><rect x="312.90" y="489.06" width="2.41" height="1.57" fill="#008000"/><rect x="322.34" y="486.02" width="2.41" height="1.57" fill="#6ba300"/><rect x="322.34" y="487.54" width="2.41" height="1.57" fill="#6ba300"/><rect x="329.42" y="489.06" width="2.41" height="1.57" fill="#6ba300"/><rect x="331.78" y="489.06" width="2.41" height="1.57" fill="#008000"/><rect x="336.50" y="489.06" width="2.41" height="1.57" fill="#008000"/><rect x="336.50" y="490.58" width="2.41" height="1.57" fill="#008000"/><rect x="338.86" y="490.58" width="2.41" height="1.57" fill="#bfbf00"/><rect x="296.38" y="495.14" width="2.41" height="1.57" fill="#bfbf00"/><rect x="312.90" y="493.62" width="2.41" height="1.57" fill="#008000"/><rect x="312.90" y="495.14" width="2.41" height="1.57" fill="#bfbf00"/><rect x="284.58" y="501.22" width="2.41" height="1.57" fill="#bfbf00"/><rect x="294.02" y="499.70" width="2.41" height="1.57" fill="#bfbf00"/><rect x="327.06" y="496.66" width="2.41" height="1.57" fill="#008000"/><rect x="324.70" y="498.18" width="2.41" height="1.57" fill="#008000"/><rect x="329.42" y="496.66" width="2.41" height="1.57" fill="#6ba300"/><rect x="277.50" y="505.78" width="2.41" height="1.57" fill="#bfbf00"/><rect x="282.22" y="510.34" width="2.41" height="1.57" fill="#bfbf00"/><rect x="294.02" y="510.34" width="2.41" height="1.57" fill="#bfbf00"/><rect x="296.38" y="510.34" width="2.41" height="1.57" fill="#bfbf00"/><rect x="301.10" y="508.82" width="2.41" height="1.57" fill="#e6e699"/><rect x="308.18" y="510.34" width="2.41" height="1.57" fill="#6ba300"/><rect x="310.54" y="510.34" width="2.41" height="1.57" fill="#6ba300"/><rect x="315.26" y="505.78" width="2.41" height="1.57" fill="#008000"/><rect x="315.26" y="507.30" width="2.41" height="1.57" fill="#008000"/><rect x="312.90" y="511.86" width="2.41" height="1.57" fill="#008000"/><rect x="298.74" y="514.90" width="2.41" height="1.57" fill="#008000"/><rect x="298.74" y="516.42" width="2.41" height="1.57" fill="#008000"/><rect x="305.82" y="514.90" width="2.41" height="1.57" fill="#008000"/><rect x="322.34" y="507.30" width="2.41" height="1.57" fill="#6ba300"/><rect x="324.70" y="508.82" width="2.41" height="1.57" fill="#bfbf00"/><rect x="319.98" y="513.38" width="2.41" height="1.57" fill="#004d66"/><rect x="327.06" y="514.90" width="2.41" height="1.57" fill="#008000"/><rect x="329.42" y="514.90" width="2.41" height="1.57" fill="#008000"/><rect x="322.34" y="517.94" width="2.41" height="1.57" fill="#bfbf00"/><rect x="324.70" y="517.94" width="2.41" height="1.57" fill="#bfbf00"/><rect x="331.78" y="514.90" width="2.41" height="1.57" fill="#008000"/><rect x="334.14" y="517.94" width="2.41" height="1.57" fill="#004d66"/><rect x="336.50" y="511.86" width="2.41" height="1.57" fill="#6ba300"/><rect x="336.50" y="513.38" width="2.41" height="1.57" fill="#6ba300"/><rect x="338.86" y="505.78" width="2.41" height="1.57" fill="#008000"/><rect x="341.22" y="505.78" width="2.41" height="1.57" fill="#008000"/><rect x="341.22" y="511.86" width="2.41" height="1.57" fill="#bfbf00"/><rect x="338.86" y="482.98" width="2.41" height="1.57" fill="#bfbf00"/><rect x="343.58" y="496.66" width="2.41" height="1.57" fill="#bfbf00"/><rect x="357.74" y="505.78" width="2.41" height="1.57" fill="#008000"/><rect x="355.38" y="505.78" width="2.41" height="1.57" fill="#008000"/><rect x="360.10" y="510.34" width="2.41" height="1.57" fill="#008000"/><rect x="360.10" y="511.86" width="2.41" height="1.57" fill="#008000"/><rect x="362.46" y="496.66" width="2.41" height="1.57" fill="#008000"/><rect x="362.46" y="498.18" width="2.41" height="1.57" fill="#6ba300"/><rect x="367.18" y="495.14" width="2.41" height="1.57" fill="#008000"/><rect x="367.18" y="499.70" width="2.41" height="1.57" fill="#008000"/><rect x="367.18" y="505.78" width="2.41" height="1.57" fill="#008000"/><rect x="374.26" y="505.78" width="2.41" height="1.57" fill="#008000"/><rect x="383.70" y="511.86" width="2.41" height="1.57" fill="#bfbf00"/><rect x="393.14" y="513.38" width="2.41" height="1.57" fill="#bfbf00"/><rect x="364.82" y="513.38" width="2.41" height="1.57" fill="#008000"/><rect x="357.74" y="514.90" width="2.41" height="1.57" fill="#008000"/><rect x="360.10" y="516.42" width="2.41" height="1.57" fill="#008000"/><rect x="355.38" y="508.82" width="2.41" height="1.57" fill="#bfbf00"/><rect x="329.42" y="507.30" width="2.41" height="1.57" fill="#008000"/><rect x="331.78" y="510.34" width="2.41" height="1.57" fill="#6ba300"/><rect x="315.26" y="516.42" width="2.41" height="1.57" fill="#bfbf00"/><rect x="305.82" y="507.30" width="2.41" height="1.57" fill="#e6e699"/><rect x="329.42" y="472.34" width="2.41" height="1.57" fill="#6ba300"/><rect x="336.50" y="472.34" width="2.41" height="1.57" fill="#008000"/><rect x="343.58" y="472.34" width="2.41" height="1.57" fill="#0000ff"/><rect x="345.94" y="472.34" width="2.41" height="1.57" fill="#6ba300"/><rect x="348.30" y="472.34" width="2.41" height="1.57" fill="#0000ff"/><rect x="353.02" y="472.34" width="2.41" height="1.57" fill="#0000ff"/><rect x="360.10" y="472.34" width="2.41" height="1.57" fill="#008000"/><rect x="329.42" y="448.02" width="2.41" height="1.57" fill="#008000"/><rect x="343.58" y="448.02" width="2.41" height="1.57" fill="#004d66"/><rect x="345.94" y="448.02" width="2.41" height="1.57" fill="#0000ff"/><rect x="348.30" y="448.02" width="2.41" height="1.57" fill="#6ba300"/><rect x="350.66" y="448.02" width="2.41" height="1.57" fill="#008000"/><rect x="345.94" y="446.50" width="2.41" height="1.57" fill="#0000ff"/><rect x="348.30" y="446.50" width="2.41" height="1.57" fill="#004d66"/><rect x="345.94" y="454.10" width="2.41" height="1.57" fill="#6ba300"/><rect x="348.30" y="454.10" width="2.41" height="1.57" fill="#008000"/><rect x="345.94" y="479.94" width="2.41" height="1.57" fill="#0000ff"/><rect x="348.30" y="479.94" width="2.41" height="1.57" fill="#008000"/><rect x="345.94" y="482.98" width="2.41" height="1.57" fill="#0000ff"/><rect x="348.30" y="482.98" width="2.41" height="1.57" fill="#0000ff"/><rect x="345.94" y="486.02" width="2.41" height="1.57" fill="#004d66"/><rect x="348.30" y="487.54" width="2.41" height="1.57" fill="#6ba300"/><rect x="345.94" y="487.54" width="2.41" height="1.57" fill="#004d66"/><rect x="343.58" y="490.58" width="2.41" height="1.57" fill="#008000"/><rect x="345.94" y="490.58" width="2.41" height="1.57" fill="#0000ff"/><rect x="348.30" y="490.58" width="2.41" height="1.57" fill="#0000ff"/><rect x="350.66" y="490.58" width="2.41" height="1.57" fill="#004d66"/><rect x="345.94" y="492.10" width="2.41" height="1.57" fill="#004d66"/><rect x="345.94" y="498.18" width="2.41" height="1.57" fill="#0000ff"/><rect x="348.30" y="498.18" width="2.41" height="1.57" fill="#0000ff"/><rect x="350.66" y="499.70" width="2.41" height="1.57" fill="#004d66"/><rect x="345.94" y="499.70" width="2.41" height="1.57" fill="#008000"/><rect x="348.30" y="499.70" width="2.41" height="1.57" fill="#008000"/><rect x="345.94" y="501.22" width="2.41" height="1.57" fill="#004d66"/><rect x="343.58" y="501.22" width="2.41" height="1.57" fill="#008000"/><rect x="343.58" y="505.78" width="2.41" height="1.57" fill="#6ba300"/><rect x="345.94" y="505.78" width="2.41" height="1.57" fill="#0000ff"/><rect x="348.30" y="505.78" width="2.41" height="1.57" fill="#0000ff"/><rect x="350.66" y="505.78" width="2.41" height="1.57" fill="#008000"/><rect x="353.02" y="505.78" width="2.41" height="1.57" fill="#6ba300"/><rect x="345.94" y="507.30" width="2.41" height="1.57" fill="#004d66"/><rect x="348.30" y="507.30" width="2.41" height="1.57" fill="#004d66"/><rect x="350.66" y="507.30" width="2.41" height="1.57" fill="#004d66"/><rect x="353.02" y="507.30" width="2.41" height="1.57" fill="#008000"/><rect x="345.94" y="508.82" width="2.41" height="1.57" fill="#0000ff"/><rect x="348.30" y="508.82" width="2.41" height="1.57" fill="#0000ff"/><rect x="350.66" y="508.82" width="2.41" height="1.57" fill="#008000"/><rect x="345.94" y="510.34" width="2.41" height="1.57" fill="#0000ff"/><rect x="348.30" y="510.34" width="2.41" height="1.57" fill="#0000ff"/><rect x="353.02" y="510.34" width="2.41" height="1.57" fill="#6ba300"/><rect x="343.58" y="511.86" width="2.41" height="1.57" fill="#004d66"/><rect x="345.94" y="511.86" width="2.41" height="1.57" fill="#0000ff"/><rect x="348.30" y="511.86" width="2.41" height="1.57" fill="#0000ff"/><rect x="350.66" y="511.86" width="2.41" height="1.57" fill="#004d66"/><rect x="343.58" y="513.38" width="2.41" height="1.57" fill="#0000ff"/><rect x="345.94" y="513.38" width="2.41" height="1.57" fill="#0000ff"/><rect x="348.30" y="513.38" width="2.41" height="1.57" fill="#70008f"/><rect x="350.66" y="513.38" width="2.41" height="1.57" fill="#008000"/><rect x="353.02" y="513.38" width="2.41" height="1.57" fill="#6ba300"/><rect x="355.38" y="513.38" width="2.41" height="1.57" fill="#008000"/><rect x="343.58" y="514.90" width="2.41" height="1.57" fill="#008000"/><rect x="345.94" y="514.90" width="2.41" height="1.57" fill="#70008f"/><rect x="348.30" y="514.90" width="2.41" height="1.57" fill="#70008f"/><rect x="350.66" y="514.90" width="2.41" height="1.57" fill="#0000ff"/><rect x="353.02" y="514.90" width="2.41" height="1.57" fill="#004d66"/><rect x="355.38" y="514.90" width="2.41" height="1.57" fill="#008000"/><rect x="341.22" y="516.42" width="2.41" height="1.57" fill="#bfbf00"/><rect x="343.58" y="516.42" width="2.41" height="1.57" fill="#6ba300"/><rect x="345.94" y="516.42" width="2.41" height="1.57" fill="#0000ff"/><rect x="348.30" y="516.42" width="2.41" height="1.57" fill="#0000ff"/><rect x="350.66" y="516.42" width="2.41" height="1.57" fill="#004d66"/><rect x="353.02" y="516.42" width="2.41" height="1.57" fill="#008000"/><rect x="357.74" y="516.42" width="2.41" height="1.57" fill="#004d66"/><rect x="345.94" y="517.94" width="2.41" height="1.57" fill="#004d66"/><rect x="348.30" y="517.94" width="2.41" height="1.57" fill="#0000ff"/><rect x="350.66" y="517.94" width="2.41" height="1.57" fill="#008000"/><rect x="353.02" y="517.94" width="2.41" height="1.57" fill="#6ba300"/><rect x="348.30" y="519.46" width="2.41" height="1.57" fill="#0000ff"/><rect x="350.66" y="519.46" width="2.41" height="1.57" fill="#008000"/><rect x="353.02" y="519.46" width="2.41" height="1.57" fill="#6ba300"/><rect x="350.66" y="520.98" width="2.41" height="1.57" fill="#008000"/><rect x="353.02" y="520.98" width="2.41" height="1.57" fill="#004d66"/></g><rect x="277.5" y="446.5" width="118" height="76" fill="none" stroke="#000" stroke-width="1"/><rect x="159.5" y="522.5" width="118" height="76" fill="#fff"/><g shape-rendering="crispEdges"><rect x="159.50" y="524.02" width="2.41" height="1.57" fill="#e6e699"/><rect x="159.50" y="527.06" width="2.41" height="1.57" fill="#008000"/><rect x="159.50" y="534.66" width="2.41" height="1.57" fill="#008000"/><rect x="159.50" y="548.34" width="2.41" height="1.57" fill="#008000"/><rect x="159.50" y="552.90" width="2.41" height="1.57" fill="#008000"/><rect x="161.86" y="552.90" width="2.41" height="1.57" fill="#6ba300"/><rect x="161.86" y="558.98" width="2.41" height="1.57" fill="#0000ff"/><rect x="161.86" y="562.02" width="2.41" height="1.57" fill="#0000ff"/><rect x="161.86" y="563.54" width="2.41" height="1.57" fill="#0000ff"/><rect x="161.86" y="565.06" width="2.41" height="1.57" fill="#0000ff"/><rect x="161.86" y="566.58" width="2.41" height="1.57" fill="#0000ff"/><rect x="164.22" y="571.14" width="2.41" height="1.57" fill="#008000"/><rect x="164.22" y="572.66" width="2.41" height="1.57" fill="#70008f"/><rect x="164.22" y="574.18" width="2.41" height="1.57" fill="#008000"/><rect x="164.22" y="575.70" width="2.41" height="1.57" fill="#70008f"/><rect x="164.22" y="577.22" width="2.41" height="1.57" fill="#008000"/><rect x="166.58" y="575.70" width="2.41" height="1.57" fill="#0000ff"/><rect x="166.58" y="577.22" width="2.41" height="1.57" fill="#0000ff"/><rect x="166.58" y="578.74" width="2.41" height="1.57" fill="#0000ff"/><rect x="166.58" y="580.26" width="2.41" height="1.57" fill="#0000ff"/><rect x="166.58" y="581.78" width="2.41" height="1.57" fill="#6ba300"/><rect x="168.94" y="580.26" width="2.41" height="1.57" fill="#0000ff"/><rect x="168.94" y="581.78" width="2.41" height="1.57" fill="#004d66"/><rect x="168.94" y="583.30" width="2.41" height="1.57" fill="#004d66"/><rect x="171.30" y="583.30" width="2.41" height="1.57" fill="#004d66"/><rect x="171.30" y="584.82" width="2.41" height="1.57" fill="#70008f"/><rect x="173.66" y="586.34" width="2.41" height="1.57" fill="#0000ff"/><rect x="173.66" y="587.86" width="2.41" height="1.57" fill="#0000ff"/><rect x="176.02" y="587.86" width="2.41" height="1.57" fill="#70008f"/><rect x="176.02" y="589.38" width="2.41" height="1.57" fill="#008000"/><rect x="176.02" y="590.90" width="2.41" height="1.57" fill="#6ba300"/><rect x="178.38" y="584.82" width="2.41" height="1.57" fill="#bfbf00"/><rect x="180.74" y="587.86" width="2.41" height="1.57" fill="#bfbf00"/><rect x="178.38" y="589.38" width="2.41" height="1.57" fill="#0000ff"/><rect x="180.74" y="590.90" width="2.41" height="1.57" fill="#0000ff"/><rect x="183.10" y="590.90" width="2.41" height="1.57" fill="#70008f"/><rect x="183.10" y="592.42" width="2.41" height="1.57" fill="#008000"/><rect x="185.46" y="592.42" width="2.41" height="1.57" fill="#0000ff"/><rect x="187.82" y="592.42" width="2.41" height="1.57" fill="#0000ff"/><rect x="190.18" y="590.90" width="2.41" height="1.57" fill="#bfbf00"/><rect x="192.54" y="590.90" width="2.41" height="1.57" fill="#bfbf00"/><rect x="190.18" y="592.42" width="2.41" height="1.57" fill="#008000"/><rect x="192.54" y="592.42" width="2.41" height="1.57" fill="#0000ff"/><rect x="192.54" y="593.94" width="2.41" height="1.57" fill="#0000ff"/><rect x="194.90" y="593.94" width="2.41" height="1.57" fill="#008000"/><rect x="197.26" y="593.94" width="2.41" height="1.57" fill="#008000"/><rect x="199.62" y="593.94" width="2.41" height="1.57" fill="#bfbf00"/><rect x="201.98" y="593.94" width="2.41" height="1.57" fill="#0000ff"/><rect x="201.98" y="595.46" width="2.41" height="1.57" fill="#bfbf00"/><rect x="204.34" y="595.46" width="2.41" height="1.57" fill="#70008f"/><rect x="206.70" y="595.46" width="2.41" height="1.57" fill="#0000ff"/><rect x="209.06" y="595.46" width="2.41" height="1.57" fill="#0000ff"/><rect x="211.42" y="595.46" width="2.41" height="1.57" fill="#0000ff"/><rect x="213.78" y="595.46" width="2.41" height="1.57" fill="#0000ff"/><rect x="216.14" y="595.46" width="2.41" height="1.57" fill="#0000ff"/><rect x="213.78" y="592.42" width="2.41" height="1.57" fill="#e6e699"/><rect x="220.86" y="595.46" width="2.41" height="1.57" fill="#0000ff"/><rect x="232.66" y="596.98" width="2.41" height="1.57" fill="#70008f"/><rect x="232.66" y="595.46" width="2.41" height="1.57" fill="#70008f"/><rect x="239.74" y="595.46" width="2.41" height="1.57" fill="#e6e699"/><rect x="260.98" y="596.98" width="2.41" height="1.57" fill="#004d66"/><rect x="260.98" y="595.46" width="2.41" height="1.57" fill="#004d66"/><rect x="270.42" y="595.46" width="2.41" height="1.57" fill="#0000ff"/><rect x="272.78" y="595.46" width="2.41" height="1.57" fill="#0000ff"/><rect x="275.14" y="595.46" width="2.41" height="1.57" fill="#0000ff"/><rect x="270.42" y="596.98" width="2.41" height="1.57" fill="#0000ff"/><rect x="272.78" y="596.98" width="2.41" height="1.57" fill="#0000ff"/><rect x="275.14" y="596.98" width="2.41" height="1.57" fill="#0000ff"/><rect x="166.58" y="583.30" width="2.41" height="1.57" fill="#6ba300"/><rect x="178.38" y="592.42" width="2.41" height="1.57" fill="#6ba300"/><rect x="173.66" y="584.82" width="2.41" height="1.57" fill="#008000"/></g><rect x="159.5" y="522.5" width="118" height="76" fill="none" stroke="#000" stroke-width="1"/><rect x="277.5" y="522.5" width="118" height="76" fill="#fff"/><g shape-rendering="crispEdges"><rect x="312.90" y="590.90" width="2.41" height="1.57" fill="#008000"/><rect x="341.22" y="586.34" width="2.41" height="1.57" fill="#e6e699"/><rect x="324.70" y="586.34" width="2.41" height="1.57" fill="#008000"/><rect x="362.46" y="593.94" width="2.41" height="1.57" fill="#004d66"/><rect x="317.62" y="592.42" width="2.41" height="1.57" fill="#008000"/><rect x="336.50" y="586.34" width="2.41" height="1.57" fill="#bfbf00"/><rect x="338.86" y="586.34" width="2.41" height="1.57" fill="#bfbf00"/><rect x="334.14" y="589.38" width="2.41" height="1.57" fill="#008000"/><rect x="319.98" y="583.30" width="2.41" height="1.57" fill="#6ba300"/><rect x="329.42" y="592.42" width="2.41" height="1.57" fill="#008000"/><rect x="331.78" y="592.42" width="2.41" height="1.57" fill="#008000"/><rect x="327.06" y="587.86" width="2.41" height="1.57" fill="#6ba300"/><rect x="301.10" y="596.98" width="2.41" height="1.57" fill="#bfbf00"/><rect x="303.46" y="596.98" width="2.41" height="1.57" fill="#bfbf00"/><rect x="338.86" y="587.86" width="2.41" height="1.57" fill="#6ba300"/><rect x="329.42" y="589.38" width="2.41" height="1.57" fill="#008000"/><rect x="334.14" y="590.90" width="2.41" height="1.57" fill="#004d66"/><rect x="336.50" y="590.90" width="2.41" height="1.57" fill="#004d66"/><rect x="301.10" y="595.46" width="2.41" height="1.57" fill="#008000"/><rect x="303.46" y="595.46" width="2.41" height="1.57" fill="#bfbf00"/><rect x="338.86" y="589.38" width="2.41" height="1.57" fill="#008000"/><rect x="341.22" y="589.38" width="2.41" height="1.57" fill="#008000"/><rect x="315.26" y="586.34" width="2.41" height="1.57" fill="#008000"/><rect x="336.50" y="583.30" width="2.41" height="1.57" fill="#6ba300"/><rect x="338.86" y="583.30" width="2.41" height="1.57" fill="#6ba300"/><rect x="322.34" y="590.90" width="2.41" height="1.57" fill="#008000"/><rect x="357.74" y="587.86" width="2.41" height="1.57" fill="#bfbf00"/><rect x="360.10" y="587.86" width="2.41" height="1.57" fill="#008000"/><rect x="305.82" y="595.46" width="2.41" height="1.57" fill="#6ba300"/><rect x="308.18" y="595.46" width="2.41" height="1.57" fill="#6ba300"/><rect x="345.94" y="593.94" width="2.41" height="1.57" fill="#0000ff"/><rect x="327.06" y="592.42" width="2.41" height="1.57" fill="#6ba300"/><rect x="341.22" y="595.46" width="2.41" height="1.57" fill="#bfbf00"/><rect x="319.98" y="592.42" width="2.41" height="1.57" fill="#008000"/><rect x="345.94" y="592.42" width="2.41" height="1.57" fill="#0000ff"/><rect x="336.50" y="595.46" width="2.41" height="1.57" fill="#008000"/><rect x="338.86" y="595.46" width="2.41" height="1.57" fill="#008000"/><rect x="317.62" y="583.30" width="2.41" height="1.57" fill="#6ba300"/><rect x="319.98" y="584.82" width="2.41" height="1.57" fill="#6ba300"/><rect x="322.34" y="584.82" width="2.41" height="1.57" fill="#6ba300"/><rect x="319.98" y="587.86" width="2.41" height="1.57" fill="#6ba300"/><rect x="322.34" y="587.86" width="2.41" height="1.57" fill="#6ba300"/><rect x="345.94" y="581.78" width="2.41" height="1.57" fill="#004d66"/><rect x="378.98" y="581.78" width="2.41" height="1.57" fill="#008000"/><rect x="381.34" y="581.78" width="2.41" height="1.57" fill="#008000"/><rect x="301.10" y="584.82" width="2.41" height="1.57" fill="#6ba300"/><rect x="303.46" y="584.82" width="2.41" height="1.57" fill="#6ba300"/><rect x="343.58" y="586.34" width="2.41" height="1.57" fill="#bfbf00"/><rect x="345.94" y="586.34" width="2.41" height="1.57" fill="#008000"/><rect x="341.22" y="593.94" width="2.41" height="1.57" fill="#008000"/><rect x="343.58" y="593.94" width="2.41" height="1.57" fill="#008000"/><rect x="319.98" y="581.78" width="2.41" height="1.57" fill="#008000"/><rect x="353.02" y="586.34" width="2.41" height="1.57" fill="#008000"/><rect x="305.82" y="589.38" width="2.41" height="1.57" fill="#004d66"/><rect x="308.18" y="589.38" width="2.41" height="1.57" fill="#004d66"/><rect x="350.66" y="590.90" width="2.41" height="1.57" fill="#0000ff"/><rect x="357.74" y="583.30" width="2.41" height="1.57" fill="#008000"/><rect x="348.30" y="586.34" width="2.41" height="1.57" fill="#0000ff"/><rect x="305.82" y="586.34" width="2.41" height="1.57" fill="#bfbf00"/><rect x="282.22" y="586.34" width="2.41" height="1.57" fill="#6ba300"/><rect x="301.10" y="589.38" width="2.41" height="1.57" fill="#bfbf00"/><rect x="319.98" y="589.38" width="2.41" height="1.57" fill="#e6e699"/><rect x="294.02" y="583.30" width="2.41" height="1.57" fill="#6ba300"/><rect x="282.22" y="587.86" width="2.41" height="1.57" fill="#bfbf00"/><rect x="298.74" y="589.38" width="2.41" height="1.57" fill="#bfbf00"/><rect x="277.50" y="583.30" width="2.41" height="1.57" fill="#e6e699"/><rect x="350.66" y="548.34" width="2.41" height="1.57" fill="#008000"/><rect x="350.66" y="552.90" width="2.41" height="1.57" fill="#008000"/><rect x="350.66" y="554.42" width="2.41" height="1.57" fill="#008000"/><rect x="350.66" y="558.98" width="2.41" height="1.57" fill="#0000ff"/><rect x="353.02" y="558.98" width="2.41" height="1.57" fill="#008000"/><rect x="348.30" y="562.02" width="2.41" height="1.57" fill="#0000ff"/><rect x="348.30" y="563.54" width="2.41" height="1.57" fill="#0000ff"/><rect x="350.66" y="562.02" width="2.41" height="1.57" fill="#0000ff"/><rect x="350.66" y="563.54" width="2.41" height="1.57" fill="#0000ff"/><rect x="348.30" y="565.06" width="2.41" height="1.57" fill="#0000ff"/><rect x="350.66" y="565.06" width="2.41" height="1.57" fill="#004d66"/><rect x="350.66" y="571.14" width="2.41" height="1.57" fill="#008000"/><rect x="350.66" y="572.66" width="2.41" height="1.57" fill="#6ba300"/><rect x="355.38" y="574.18" width="2.41" height="1.57" fill="#004d66"/><rect x="334.14" y="574.18" width="2.41" height="1.57" fill="#004d66"/><rect x="298.74" y="575.70" width="2.41" height="1.57" fill="#6ba300"/><rect x="312.90" y="575.70" width="2.41" height="1.57" fill="#bfbf00"/><rect x="322.34" y="578.74" width="2.41" height="1.57" fill="#bfbf00"/><rect x="334.14" y="578.74" width="2.41" height="1.57" fill="#bfbf00"/><rect x="305.82" y="580.26" width="2.41" height="1.57" fill="#6ba300"/><rect x="383.70" y="587.86" width="2.41" height="1.57" fill="#bfbf00"/><rect x="393.14" y="586.34" width="2.41" height="1.57" fill="#6ba300"/><rect x="374.26" y="590.90" width="2.41" height="1.57" fill="#008000"/><rect x="367.18" y="590.90" width="2.41" height="1.57" fill="#008000"/><rect x="367.18" y="593.94" width="2.41" height="1.57" fill="#008000"/><rect x="360.10" y="596.98" width="2.41" height="1.57" fill="#008000"/><rect x="329.42" y="595.46" width="2.41" height="1.57" fill="#6ba300"/><rect x="329.42" y="596.98" width="2.41" height="1.57" fill="#6ba300"/><rect x="331.78" y="595.46" width="2.41" height="1.57" fill="#6ba300"/><rect x="331.78" y="596.98" width="2.41" height="1.57" fill="#6ba300"/><rect x="277.50" y="590.90" width="2.41" height="1.57" fill="#bfbf00"/><rect x="282.22" y="590.90" width="2.41" height="1.57" fill="#bfbf00"/><rect x="284.58" y="590.90" width="2.41" height="1.57" fill="#bfbf00"/><rect x="294.02" y="587.86" width="2.41" height="1.57" fill="#bfbf00"/><rect x="298.74" y="584.82" width="2.41" height="1.57" fill="#6ba300"/><rect x="296.38" y="593.94" width="2.41" height="1.57" fill="#e6e699"/><rect x="298.74" y="593.94" width="2.41" height="1.57" fill="#e6e699"/><rect x="343.58" y="575.70" width="2.41" height="1.57" fill="#008000"/><rect x="345.94" y="574.18" width="2.41" height="1.57" fill="#008000"/><rect x="348.30" y="574.18" width="2.41" height="1.57" fill="#008000"/><rect x="350.66" y="574.18" width="2.41" height="1.57" fill="#6ba300"/><rect x="353.02" y="574.18" width="2.41" height="1.57" fill="#6ba300"/><rect x="355.38" y="577.22" width="2.41" height="1.57" fill="#008000"/><rect x="343.58" y="577.22" width="2.41" height="1.57" fill="#6ba300"/><rect x="345.94" y="577.22" width="2.41" height="1.57" fill="#004d66"/><rect x="348.30" y="577.22" width="2.41" height="1.57" fill="#0000ff"/><rect x="350.66" y="577.22" width="2.41" height="1.57" fill="#0000ff"/><rect x="353.02" y="577.22" width="2.41" height="1.57" fill="#bfbf00"/><rect x="343.58" y="578.74" width="2.41" height="1.57" fill="#008000"/><rect x="345.94" y="578.74" width="2.41" height="1.57" fill="#008000"/><rect x="348.30" y="578.74" width="2.41" height="1.57" fill="#0000ff"/><rect x="350.66" y="578.74" width="2.41" height="1.57" fill="#008000"/><rect x="353.02" y="578.74" width="2.41" height="1.57" fill="#e6e699"/><rect x="345.94" y="580.26" width="2.41" height="1.57" fill="#6ba300"/><rect x="348.30" y="580.26" width="2.41" height="1.57" fill="#0000ff"/><rect x="350.66" y="580.26" width="2.41" height="1.57" fill="#008000"/><rect x="355.38" y="580.26" width="2.41" height="1.57" fill="#004d66"/><rect x="357.74" y="580.26" width="2.41" height="1.57" fill="#004d66"/><rect x="343.58" y="581.78" width="2.41" height="1.57" fill="#008000"/><rect x="348.30" y="581.78" width="2.41" height="1.57" fill="#0000ff"/><rect x="350.66" y="581.78" width="2.41" height="1.57" fill="#0000ff"/><rect x="353.02" y="581.78" width="2.41" height="1.57" fill="#008000"/><rect x="345.94" y="583.30" width="2.41" height="1.57" fill="#008000"/><rect x="348.30" y="583.30" width="2.41" height="1.57" fill="#0000ff"/><rect x="350.66" y="583.30" width="2.41" height="1.57" fill="#0000ff"/><rect x="353.02" y="583.30" width="2.41" height="1.57" fill="#004d66"/><rect x="355.38" y="584.82" width="2.41" height="1.57" fill="#bfbf00"/><rect x="357.74" y="584.82" width="2.41" height="1.57" fill="#008000"/><rect x="362.46" y="584.82" width="2.41" height="1.57" fill="#008000"/><rect x="364.82" y="584.82" width="2.41" height="1.57" fill="#008000"/><rect x="343.58" y="584.82" width="2.41" height="1.57" fill="#0000ff"/><rect x="345.94" y="584.82" width="2.41" height="1.57" fill="#004d66"/><rect x="348.30" y="584.82" width="2.41" height="1.57" fill="#0000ff"/><rect x="350.66" y="584.82" width="2.41" height="1.57" fill="#0000ff"/><rect x="353.02" y="584.82" width="2.41" height="1.57" fill="#008000"/><rect x="350.66" y="586.34" width="2.41" height="1.57" fill="#0000ff"/><rect x="355.38" y="587.86" width="2.41" height="1.57" fill="#008000"/><rect x="341.22" y="587.86" width="2.41" height="1.57" fill="#008000"/><rect x="343.58" y="587.86" width="2.41" height="1.57" fill="#004d66"/><rect x="345.94" y="587.86" width="2.41" height="1.57" fill="#0000ff"/><rect x="348.30" y="587.86" width="2.41" height="1.57" fill="#0000ff"/><rect x="350.66" y="587.86" width="2.41" height="1.57" fill="#0000ff"/><rect x="353.02" y="587.86" width="2.41" height="1.57" fill="#004d66"/><rect x="345.94" y="589.38" width="2.41" height="1.57" fill="#0000ff"/><rect x="348.30" y="589.38" width="2.41" height="1.57" fill="#0000ff"/><rect x="350.66" y="589.38" width="2.41" height="1.57" fill="#0000ff"/><rect x="353.02" y="589.38" width="2.41" height="1.57" fill="#004d66"/><rect x="355.38" y="590.90" width="2.41" height="1.57" fill="#008000"/><rect x="343.58" y="590.90" width="2.41" height="1.57" fill="#008000"/><rect x="345.94" y="590.90" width="2.41" height="1.57" fill="#0000ff"/><rect x="348.30" y="590.90" width="2.41" height="1.57" fill="#0000ff"/><rect x="353.02" y="590.90" width="2.41" height="1.57" fill="#004d66"/><rect x="357.74" y="592.42" width="2.41" height="1.57" fill="#004d66"/><rect x="343.58" y="592.42" width="2.41" height="1.57" fill="#6ba300"/><rect x="348.30" y="592.42" width="2.41" height="1.57" fill="#0000ff"/><rect x="350.66" y="592.42" width="2.41" height="1.57" fill="#004d66"/><rect x="353.02" y="592.42" width="2.41" height="1.57" fill="#008000"/><rect x="348.30" y="593.94" width="2.41" height="1.57" fill="#0000ff"/><rect x="350.66" y="593.94" width="2.41" height="1.57" fill="#004d66"/><rect x="353.02" y="593.94" width="2.41" height="1.57" fill="#008000"/><rect x="343.58" y="595.46" width="2.41" height="1.57" fill="#0000ff"/><rect x="345.94" y="595.46" width="2.41" height="1.57" fill="#0000ff"/><rect x="348.30" y="595.46" width="2.41" height="1.57" fill="#70008f"/><rect x="350.66" y="595.46" width="2.41" height="1.57" fill="#0000ff"/><rect x="353.02" y="595.46" width="2.41" height="1.57" fill="#008000"/><rect x="343.58" y="596.98" width="2.41" height="1.57" fill="#0000ff"/><rect x="345.94" y="596.98" width="2.41" height="1.57" fill="#0000ff"/><rect x="348.30" y="596.98" width="2.41" height="1.57" fill="#70008f"/><rect x="350.66" y="596.98" width="2.41" height="1.57" fill="#0000ff"/><rect x="353.02" y="596.98" width="2.41" height="1.57" fill="#004d66"/></g><rect x="277.5" y="522.5" width="118" height="76" fill="none" stroke="#000" stroke-width="1"/><rect x="41.5" y="598.5" width="118" height="76" fill="#fff"/><g shape-rendering="crispEdges"><rect x="50.94" y="628.90" width="2.41" height="1.57" fill="#0000ff"/><rect x="55.66" y="618.26" width="2.41" height="1.57" fill="#bfbf00"/><rect x="55.66" y="633.46" width="2.41" height="1.57" fill="#004d66"/><rect x="58.02" y="633.46" width="2.41" height="1.57" fill="#004d66"/><rect x="46.22" y="631.94" width="2.41" height="1.57" fill="#008000"/><rect x="48.58" y="631.94" width="2.41" height="1.57" fill="#008000"/><rect x="62.74" y="630.42" width="2.41" height="1.57" fill="#bfbf00"/><rect x="62.74" y="624.34" width="2.41" height="1.57" fill="#008000"/><rect x="65.10" y="624.34" width="2.41" height="1.57" fill="#008000"/><rect x="60.38" y="619.78" width="2.41" height="1.57" fill="#bfbf00"/><rect x="53.30" y="633.46" width="2.41" height="1.57" fill="#bfbf00"/><rect x="55.66" y="630.42" width="2.41" height="1.57" fill="#6ba300"/><rect x="60.38" y="628.90" width="2.41" height="1.57" fill="#008000"/><rect x="65.10" y="607.62" width="2.41" height="1.57" fill="#008000"/><rect x="67.46" y="607.62" width="2.41" height="1.57" fill="#008000"/><rect x="48.58" y="625.86" width="2.41" height="1.57" fill="#0000ff"/><rect x="53.30" y="625.86" width="2.41" height="1.57" fill="#6ba300"/><rect x="55.66" y="625.86" width="2.41" height="1.57" fill="#004d66"/><rect x="46.22" y="634.98" width="2.41" height="1.57" fill="#008000"/><rect x="62.74" y="625.86" width="2.41" height="1.57" fill="#0000ff"/><rect x="65.10" y="625.86" width="2.41" height="1.57" fill="#008000"/><rect x="72.18" y="621.30" width="2.41" height="1.57" fill="#008000"/><rect x="62.74" y="641.06" width="2.41" height="1.57" fill="#bfbf00"/><rect x="46.22" y="598.50" width="2.41" height="1.57" fill="#bfbf00"/><rect x="53.30" y="601.54" width="2.41" height="1.57" fill="#bfbf00"/><rect x="41.50" y="604.58" width="2.41" height="1.57" fill="#bfbf00"/><rect x="41.50" y="609.14" width="2.41" height="1.57" fill="#bfbf00"/><rect x="43.86" y="610.66" width="2.41" height="1.57" fill="#008000"/><rect x="41.50" y="613.70" width="2.41" height="1.57" fill="#bfbf00"/><rect x="43.86" y="613.70" width="2.41" height="1.57" fill="#bfbf00"/><rect x="53.30" y="613.70" width="2.41" height="1.57" fill="#6ba300"/><rect x="60.38" y="610.66" width="2.41" height="1.57" fill="#008000"/><rect x="62.74" y="610.66" width="2.41" height="1.57" fill="#008000"/><rect x="67.46" y="612.18" width="2.41" height="1.57" fill="#6ba300"/><rect x="50.94" y="616.74" width="2.41" height="1.57" fill="#008000"/><rect x="62.74" y="615.22" width="2.41" height="1.57" fill="#008000"/><rect x="62.74" y="616.74" width="2.41" height="1.57" fill="#008000"/><rect x="43.86" y="619.78" width="2.41" height="1.57" fill="#e6e699"/><rect x="48.58" y="619.78" width="2.41" height="1.57" fill="#6ba300"/><rect x="50.94" y="619.78" width="2.41" height="1.57" fill="#6ba300"/><rect x="53.30" y="619.78" width="2.41" height="1.57" fill="#6ba300"/><rect x="62.74" y="619.78" width="2.41" height="1.57" fill="#bfbf00"/><rect x="69.82" y="618.26" width="2.41" height="1.57" fill="#bfbf00"/><rect x="69.82" y="619.78" width="2.41" height="1.57" fill="#008000"/><rect x="72.18" y="619.78" width="2.41" height="1.57" fill="#008000"/><rect x="74.54" y="619.78" width="2.41" height="1.57" fill="#008000"/><rect x="60.38" y="622.82" width="2.41" height="1.57" fill="#004d66"/><rect x="53.30" y="622.82" width="2.41" height="1.57" fill="#bfbf00"/><rect x="72.18" y="622.82" width="2.41" height="1.57" fill="#008000"/><rect x="93.42" y="622.82" width="2.41" height="1.57" fill="#004d66"/><rect x="88.70" y="621.30" width="2.41" height="1.57" fill="#004d66"/><rect x="67.46" y="648.66" width="2.41" height="1.57" fill="#004d66"/><rect x="69.82" y="648.66" width="2.41" height="1.57" fill="#e6e699"/><rect x="48.58" y="654.74" width="2.41" height="1.57" fill="#bfbf00"/><rect x="50.94" y="671.46" width="2.41" height="1.57" fill="#bfbf00"/><rect x="50.94" y="672.98" width="2.41" height="1.57" fill="#bfbf00"/><rect x="58.02" y="645.62" width="2.41" height="1.57" fill="#e6e699"/><rect x="58.02" y="642.58" width="2.41" height="1.57" fill="#008000"/><rect x="58.02" y="639.54" width="2.41" height="1.57" fill="#008000"/><rect x="50.94" y="638.02" width="2.41" height="1.57" fill="#6ba300"/><rect x="53.30" y="641.06" width="2.41" height="1.57" fill="#6ba300"/><rect x="43.86" y="641.06" width="2.41" height="1.57" fill="#008000"/><rect x="48.58" y="636.50" width="2.41" height="1.57" fill="#008000"/><rect x="43.86" y="633.46" width="2.41" height="1.57" fill="#008000"/><rect x="55.66" y="636.50" width="2.41" height="1.57" fill="#bfbf00"/><rect x="60.38" y="631.94" width="2.41" height="1.57" fill="#004d66"/><rect x="60.38" y="633.46" width="2.41" height="1.57" fill="#004d66"/><rect x="76.90" y="631.94" width="2.41" height="1.57" fill="#008000"/><rect x="76.90" y="633.46" width="2.41" height="1.57" fill="#008000"/><rect x="79.26" y="630.42" width="2.41" height="1.57" fill="#e6e699"/><rect x="72.18" y="630.42" width="2.41" height="1.57" fill="#6ba300"/><rect x="69.82" y="631.94" width="2.41" height="1.57" fill="#008000"/><rect x="74.54" y="631.94" width="2.41" height="1.57" fill="#6ba300"/><rect x="48.58" y="630.42" width="2.41" height="1.57" fill="#008000"/><rect x="65.10" y="628.90" width="2.41" height="1.57" fill="#0000ff"/><rect x="41.50" y="624.34" width="2.41" height="1.57" fill="#0000ff"/><rect x="43.86" y="624.34" width="2.41" height="1.57" fill="#0000ff"/><rect x="46.22" y="624.34" width="2.41" height="1.57" fill="#008000"/><rect x="50.94" y="624.34" width="2.41" height="1.57" fill="#004d66"/><rect x="58.02" y="624.34" width="2.41" height="1.57" fill="#004d66"/><rect x="60.38" y="624.34" width="2.41" height="1.57" fill="#008000"/><rect x="41.50" y="625.86" width="2.41" height="1.57" fill="#0000ff"/><rect x="43.86" y="625.86" width="2.41" height="1.57" fill="#0000ff"/><rect x="46.22" y="625.86" width="2.41" height="1.57" fill="#0000ff"/><rect x="50.94" y="625.86" width="2.41" height="1.57" fill="#0000ff"/><rect x="58.02" y="625.86" width="2.41" height="1.57" fill="#e6e699"/><rect x="60.38" y="625.86" width="2.41" height="1.57" fill="#0000ff"/><rect x="67.46" y="625.86" width="2.41" height="1.57" fill="#0000ff"/><rect x="69.82" y="625.86" width="2.41" height="1.57" fill="#0000ff"/><rect x="72.18" y="625.86" width="2.41" height="1.57" fill="#e6e699"/><rect x="74.54" y="625.86" width="2.41" height="1.57" fill="#004d66"/><rect x="76.90" y="625.86" width="2.41" height="1.57" fill="#008000"/><rect x="79.26" y="625.86" width="2.41" height="1.57" fill="#008000"/><rect x="41.50" y="627.38" width="2.41" height="1.57" fill="#0000ff"/><rect x="43.86" y="627.38" width="2.41" height="1.57" fill="#70008f"/><rect x="46.22" y="627.38" width="2.41" height="1.57" fill="#0000ff"/><rect x="48.58" y="627.38" width="2.41" height="1.57" fill="#0000ff"/><rect x="50.94" y="627.38" width="2.41" height="1.57" fill="#0000ff"/><rect x="53.30" y="627.38" width="2.41" height="1.57" fill="#0000ff"/><rect x="55.66" y="627.38" width="2.41" height="1.57" fill="#0000ff"/><rect x="58.02" y="627.38" width="2.41" height="1.57" fill="#0000ff"/><rect x="60.38" y="627.38" width="2.41" height="1.57" fill="#0000ff"/><rect x="62.74" y="627.38" width="2.41" height="1.57" fill="#0000ff"/><rect x="65.10" y="627.38" width="2.41" height="1.57" fill="#0000ff"/><rect x="67.46" y="627.38" width="2.41" height="1.57" fill="#0000ff"/><rect x="69.82" y="627.38" width="2.41" height="1.57" fill="#0000ff"/><rect x="72.18" y="627.38" width="2.41" height="1.57" fill="#0000ff"/><rect x="74.54" y="627.38" width="2.41" height="1.57" fill="#008000"/><rect x="76.90" y="627.38" width="2.41" height="1.57" fill="#0000ff"/><rect x="79.26" y="627.38" width="2.41" height="1.57" fill="#6ba300"/><rect x="81.62" y="627.38" width="2.41" height="1.57" fill="#6ba300"/><rect x="41.50" y="628.90" width="2.41" height="1.57" fill="#0000ff"/><rect x="43.86" y="628.90" width="2.41" height="1.57" fill="#0000ff"/><rect x="46.22" y="628.90" width="2.41" height="1.57" fill="#e6e699"/><rect x="48.58" y="628.90" width="2.41" height="1.57" fill="#008000"/><rect x="53.30" y="628.90" width="2.41" height="1.57" fill="#0000ff"/><rect x="55.66" y="628.90" width="2.41" height="1.57" fill="#6ba300"/><rect x="58.02" y="628.90" width="2.41" height="1.57" fill="#008000"/><rect x="62.74" y="628.90" width="2.41" height="1.57" fill="#e6e699"/><rect x="69.82" y="628.90" width="2.41" height="1.57" fill="#004d66"/><rect x="72.18" y="628.90" width="2.41" height="1.57" fill="#008000"/><rect x="76.90" y="628.90" width="2.41" height="1.57" fill="#008000"/><rect x="88.70" y="625.86" width="2.41" height="1.57" fill="#6ba300"/><rect x="91.06" y="625.86" width="2.41" height="1.57" fill="#008000"/><rect x="93.42" y="625.86" width="2.41" height="1.57" fill="#004d66"/><rect x="95.78" y="624.34" width="2.41" height="1.57" fill="#004d66"/><rect x="91.06" y="627.38" width="2.41" height="1.57" fill="#008000"/><rect x="93.42" y="627.38" width="2.41" height="1.57" fill="#0000ff"/><rect x="95.78" y="625.86" width="2.41" height="1.57" fill="#008000"/><rect x="93.42" y="628.90" width="2.41" height="1.57" fill="#0000ff"/><rect x="88.70" y="627.38" width="2.41" height="1.57" fill="#004d66"/><rect x="100.50" y="627.38" width="2.41" height="1.57" fill="#004d66"/><rect x="100.50" y="625.86" width="2.41" height="1.57" fill="#004d66"/><rect x="107.58" y="627.38" width="2.41" height="1.57" fill="#008000"/><rect x="114.66" y="627.38" width="2.41" height="1.57" fill="#008000"/><rect x="117.02" y="627.38" width="2.41" height="1.57" fill="#008000"/><rect x="135.90" y="627.38" width="2.41" height="1.57" fill="#bfbf00"/><rect x="135.90" y="628.90" width="2.41" height="1.57" fill="#008000"/><rect x="147.70" y="628.90" width="2.41" height="1.57" fill="#008000"/><rect x="154.78" y="627.38" width="2.41" height="1.57" fill="#bfbf00"/><rect x="157.14" y="628.90" width="2.41" height="1.57" fill="#6ba300"/></g><rect x="41.5" y="598.5" width="118" height="76" fill="none" stroke="#000" stroke-width="1"/><rect x="159.5" y="598.5" width="118" height="76" fill="#fff"/><g shape-rendering="crispEdges"><rect x="168.94" y="622.82" width="2.41" height="1.57" fill="#6ba300"/><rect x="171.30" y="622.82" width="2.41" height="1.57" fill="#0000ff"/><rect x="197.26" y="615.22" width="2.41" height="1.57" fill="#004d66"/><rect x="176.02" y="621.30" width="2.41" height="1.57" fill="#bfbf00"/><rect x="183.10" y="631.94" width="2.41" height="1.57" fill="#e6e699"/><rect x="168.94" y="644.10" width="2.41" height="1.57" fill="#008000"/><rect x="190.18" y="633.46" width="2.41" height="1.57" fill="#008000"/><rect x="164.22" y="612.18" width="2.41" height="1.57" fill="#bfbf00"/><rect x="166.58" y="612.18" width="2.41" height="1.57" fill="#bfbf00"/><rect x="161.86" y="630.42" width="2.41" height="1.57" fill="#e6e699"/><rect x="161.86" y="610.66" width="2.41" height="1.57" fill="#008000"/><rect x="183.10" y="634.98" width="2.41" height="1.57" fill="#004d66"/><rect x="178.38" y="636.50" width="2.41" height="1.57" fill="#e6e699"/><rect x="180.74" y="636.50" width="2.41" height="1.57" fill="#bfbf00"/><rect x="164.22" y="633.46" width="2.41" height="1.57" fill="#008000"/><rect x="171.30" y="624.34" width="2.41" height="1.57" fill="#004d66"/><rect x="190.18" y="621.30" width="2.41" height="1.57" fill="#6ba300"/><rect x="192.54" y="621.30" width="2.41" height="1.57" fill="#6ba300"/><rect x="176.02" y="601.54" width="2.41" height="1.57" fill="#bfbf00"/><rect x="199.62" y="598.50" width="2.41" height="1.57" fill="#bfbf00"/><rect x="168.94" y="610.66" width="2.41" height="1.57" fill="#004d66"/><rect x="171.30" y="613.70" width="2.41" height="1.57" fill="#008000"/><rect x="166.58" y="615.22" width="2.41" height="1.57" fill="#6ba300"/><rect x="168.94" y="615.22" width="2.41" height="1.57" fill="#6ba300"/><rect x="171.30" y="616.74" width="2.41" height="1.57" fill="#008000"/><rect x="180.74" y="613.70" width="2.41" height="1.57" fill="#6ba300"/><rect x="183.10" y="616.74" width="2.41" height="1.57" fill="#008000"/><rect x="166.58" y="619.78" width="2.41" height="1.57" fill="#004d66"/><rect x="171.30" y="619.78" width="2.41" height="1.57" fill="#bfbf00"/><rect x="176.02" y="619.78" width="2.41" height="1.57" fill="#bfbf00"/><rect x="180.74" y="619.78" width="2.41" height="1.57" fill="#6ba300"/><rect x="187.82" y="618.26" width="2.41" height="1.57" fill="#6ba300"/><rect x="192.54" y="619.78" width="2.41" height="1.57" fill="#6ba300"/><rect x="211.42" y="610.66" width="2.41" height="1.57" fill="#008000"/><rect x="213.78" y="610.66" width="2.41" height="1.57" fill="#008000"/><rect x="216.14" y="613.70" width="2.41" height="1.57" fill="#bfbf00"/><rect x="232.66" y="613.70" width="2.41" height="1.57" fill="#e6e699"/><rect x="232.66" y="618.26" width="2.41" height="1.57" fill="#008000"/><rect x="239.74" y="619.78" width="2.41" height="1.57" fill="#e6e699"/><rect x="270.42" y="604.58" width="2.41" height="1.57" fill="#bfbf00"/><rect x="270.42" y="609.14" width="2.41" height="1.57" fill="#bfbf00"/><rect x="270.42" y="612.18" width="2.41" height="1.57" fill="#bfbf00"/><rect x="206.70" y="622.82" width="2.41" height="1.57" fill="#008000"/><rect x="192.54" y="624.34" width="2.41" height="1.57" fill="#bfbf00"/><rect x="213.78" y="624.34" width="2.41" height="1.57" fill="#e6e699"/><rect x="168.94" y="648.66" width="2.41" height="1.57" fill="#008000"/><rect x="166.58" y="647.14" width="2.41" height="1.57" fill="#e6e699"/><rect x="176.02" y="645.62" width="2.41" height="1.57" fill="#e6e699"/><rect x="183.10" y="654.74" width="2.41" height="1.57" fill="#bfbf00"/><rect x="192.54" y="671.46" width="2.41" height="1.57" fill="#bfbf00"/><rect x="192.54" y="672.98" width="2.41" height="1.57" fill="#bfbf00"/><rect x="171.30" y="639.54" width="2.41" height="1.57" fill="#bfbf00"/><rect x="173.66" y="639.54" width="2.41" height="1.57" fill="#bfbf00"/><rect x="176.02" y="641.06" width="2.41" height="1.57" fill="#bfbf00"/><rect x="171.30" y="642.58" width="2.41" height="1.57" fill="#008000"/><rect x="183.10" y="636.50" width="2.41" height="1.57" fill="#008000"/><rect x="183.10" y="639.54" width="2.41" height="1.57" fill="#008000"/><rect x="183.10" y="641.06" width="2.41" height="1.57" fill="#008000"/><rect x="190.18" y="634.98" width="2.41" height="1.57" fill="#008000"/><rect x="209.06" y="633.46" width="2.41" height="1.57" fill="#004d66"/><rect x="209.06" y="641.06" width="2.41" height="1.57" fill="#008000"/><rect x="171.30" y="631.94" width="2.41" height="1.57" fill="#004d66"/><rect x="171.30" y="633.46" width="2.41" height="1.57" fill="#004d66"/><rect x="164.22" y="631.94" width="2.41" height="1.57" fill="#008000"/><rect x="168.94" y="633.46" width="2.41" height="1.57" fill="#6ba300"/><rect x="176.02" y="630.42" width="2.41" height="1.57" fill="#6ba300"/><rect x="178.38" y="630.42" width="2.41" height="1.57" fill="#6ba300"/><rect x="183.10" y="630.42" width="2.41" height="1.57" fill="#6ba300"/><rect x="190.18" y="630.42" width="2.41" height="1.57" fill="#008000"/><rect x="197.26" y="630.42" width="2.41" height="1.57" fill="#bfbf00"/><rect x="204.34" y="630.42" width="2.41" height="1.57" fill="#008000"/><rect x="206.70" y="630.42" width="2.41" height="1.57" fill="#008000"/><rect x="216.14" y="630.42" width="2.41" height="1.57" fill="#bfbf00"/><rect x="220.86" y="630.42" width="2.41" height="1.57" fill="#bfbf00"/><rect x="161.86" y="622.82" width="2.41" height="1.57" fill="#004d66"/><rect x="164.22" y="622.82" width="2.41" height="1.57" fill="#6ba300"/><rect x="161.86" y="624.34" width="2.41" height="1.57" fill="#004d66"/><rect x="166.58" y="624.34" width="2.41" height="1.57" fill="#6ba300"/><rect x="173.66" y="624.34" width="2.41" height="1.57" fill="#008000"/><rect x="204.34" y="624.34" width="2.41" height="1.57" fill="#008000"/><rect x="159.50" y="625.86" width="2.41" height="1.57" fill="#0000ff"/><rect x="161.86" y="625.86" width="2.41" height="1.57" fill="#0000ff"/><rect x="164.22" y="625.86" width="2.41" height="1.57" fill="#0000ff"/><rect x="166.58" y="625.86" width="2.41" height="1.57" fill="#0000ff"/><rect x="168.94" y="625.86" width="2.41" height="1.57" fill="#0000ff"/><rect x="171.30" y="625.86" width="2.41" height="1.57" fill="#0000ff"/><rect x="173.66" y="625.86" width="2.41" height="1.57" fill="#008000"/><rect x="176.02" y="625.86" width="2.41" height="1.57" fill="#008000"/><rect x="180.74" y="625.86" width="2.41" height="1.57" fill="#0000ff"/><rect x="190.18" y="625.86" width="2.41" height="1.57" fill="#004d66"/><rect x="192.54" y="625.86" width="2.41" height="1.57" fill="#6ba300"/><rect x="201.98" y="625.86" width="2.41" height="1.57" fill="#004d66"/><rect x="204.34" y="625.86" width="2.41" height="1.57" fill="#6ba300"/><rect x="216.14" y="625.86" width="2.41" height="1.57" fill="#0000ff"/><rect x="220.86" y="625.86" width="2.41" height="1.57" fill="#008000"/><rect x="159.50" y="627.38" width="2.41" height="1.57" fill="#0000ff"/><rect x="161.86" y="627.38" width="2.41" height="1.57" fill="#0000ff"/><rect x="164.22" y="627.38" width="2.41" height="1.57" fill="#0000ff"/><rect x="166.58" y="627.38" width="2.41" height="1.57" fill="#0000ff"/><rect x="168.94" y="627.38" width="2.41" height="1.57" fill="#0000ff"/><rect x="171.30" y="627.38" width="2.41" height="1.57" fill="#70008f"/><rect x="173.66" y="627.38" width="2.41" height="1.57" fill="#0000ff"/><rect x="176.02" y="627.38" width="2.41" height="1.57" fill="#6ba300"/><rect x="183.10" y="627.38" width="2.41" height="1.57" fill="#0000ff"/><rect x="190.18" y="627.38" width="2.41" height="1.57" fill="#008000"/><rect x="192.54" y="627.38" width="2.41" height="1.57" fill="#0000ff"/><rect x="197.26" y="627.38" width="2.41" height="1.57" fill="#bfbf00"/><rect x="199.62" y="627.38" width="2.41" height="1.57" fill="#bfbf00"/><rect x="201.98" y="627.38" width="2.41" height="1.57" fill="#0000ff"/><rect x="204.34" y="627.38" width="2.41" height="1.57" fill="#70008f"/><rect x="209.06" y="627.38" width="2.41" height="1.57" fill="#008000"/><rect x="216.14" y="627.38" width="2.41" height="1.57" fill="#0000ff"/><rect x="220.86" y="627.38" width="2.41" height="1.57" fill="#0000ff"/><rect x="161.86" y="628.90" width="2.41" height="1.57" fill="#0000ff"/><rect x="164.22" y="628.90" width="2.41" height="1.57" fill="#0000ff"/><rect x="166.58" y="628.90" width="2.41" height="1.57" fill="#004d66"/><rect x="168.94" y="628.90" width="2.41" height="1.57" fill="#008000"/><rect x="171.30" y="628.90" width="2.41" height="1.57" fill="#6ba300"/><rect x="173.66" y="628.90" width="2.41" height="1.57" fill="#6ba300"/><rect x="178.38" y="628.90" width="2.41" height="1.57" fill="#008000"/><rect x="180.74" y="628.90" width="2.41" height="1.57" fill="#6ba300"/><rect x="183.10" y="628.90" width="2.41" height="1.57" fill="#0000ff"/><rect x="190.18" y="628.90" width="2.41" height="1.57" fill="#008000"/><rect x="209.06" y="628.90" width="2.41" height="1.57" fill="#6ba300"/><rect x="211.42" y="628.90" width="2.41" height="1.57" fill="#004d66"/><rect x="220.86" y="628.90" width="2.41" height="1.57" fill="#0000ff"/><rect x="232.66" y="622.82" width="2.41" height="1.57" fill="#0000ff"/><rect x="232.66" y="624.34" width="2.41" height="1.57" fill="#0000ff"/><rect x="232.66" y="625.86" width="2.41" height="1.57" fill="#008000"/><rect x="232.66" y="627.38" width="2.41" height="1.57" fill="#0000ff"/><rect x="232.66" y="628.90" width="2.41" height="1.57" fill="#008000"/><rect x="260.98" y="625.86" width="2.41" height="1.57" fill="#008000"/><rect x="260.98" y="627.38" width="2.41" height="1.57" fill="#008000"/><rect x="270.42" y="622.82" width="2.41" height="1.57" fill="#0000ff"/><rect x="270.42" y="624.34" width="2.41" height="1.57" fill="#0000ff"/><rect x="272.78" y="627.38" width="2.41" height="1.57" fill="#0000ff"/><rect x="272.78" y="625.86" width="2.41" height="1.57" fill="#004d66"/><rect x="275.14" y="628.90" width="2.41" height="1.57" fill="#008000"/><rect x="275.14" y="630.42" width="2.41" height="1.57" fill="#bfbf00"/><rect x="270.42" y="627.38" width="2.41" height="1.57" fill="#bfbf00"/></g><rect x="159.5" y="598.5" width="118" height="76" fill="none" stroke="#000" stroke-width="1"/><rect x="277.5" y="598.5" width="118" height="76" fill="#fff"/><g shape-rendering="crispEdges"><rect x="324.70" y="627.38" width="2.41" height="1.57" fill="#6ba300"/><rect x="367.18" y="621.30" width="2.41" height="1.57" fill="#e6e699"/><rect x="341.22" y="636.50" width="2.41" height="1.57" fill="#008000"/><rect x="343.58" y="636.50" width="2.41" height="1.57" fill="#008000"/><rect x="334.14" y="625.86" width="2.41" height="1.57" fill="#008000"/><rect x="336.50" y="625.86" width="2.41" height="1.57" fill="#008000"/><rect x="348.30" y="627.38" width="2.41" height="1.57" fill="#ff0000"/><rect x="350.66" y="627.38" width="2.41" height="1.57" fill="#ff0000"/><rect x="315.26" y="627.38" width="2.41" height="1.57" fill="#008000"/><rect x="317.62" y="627.38" width="2.41" height="1.57" fill="#008000"/><rect x="322.34" y="627.38" width="2.41" height="1.57" fill="#008000"/><rect x="343.58" y="618.26" width="2.41" height="1.57" fill="#e6e699"/><rect x="345.94" y="618.26" width="2.41" height="1.57" fill="#e6e699"/><rect x="317.62" y="619.78" width="2.41" height="1.57" fill="#e6e699"/><rect x="319.98" y="619.78" width="2.41" height="1.57" fill="#e6e699"/><rect x="312.90" y="624.34" width="2.41" height="1.57" fill="#008000"/><rect x="315.26" y="624.34" width="2.41" height="1.57" fill="#008000"/><rect x="331.78" y="615.22" width="2.41" height="1.57" fill="#008000"/><rect x="319.98" y="641.06" width="2.41" height="1.57" fill="#008000"/><rect x="336.50" y="630.42" width="2.41" height="1.57" fill="#008000"/><rect x="338.86" y="630.42" width="2.41" height="1.57" fill="#6ba300"/><rect x="348.30" y="630.42" width="2.41" height="1.57" fill="#70008f"/><rect x="308.18" y="633.46" width="2.41" height="1.57" fill="#008000"/><rect x="310.54" y="633.46" width="2.41" height="1.57" fill="#008000"/><rect x="312.90" y="618.26" width="2.41" height="1.57" fill="#6ba300"/><rect x="315.26" y="618.26" width="2.41" height="1.57" fill="#6ba300"/><rect x="319.98" y="613.70" width="2.41" height="1.57" fill="#004d66"/><rect x="322.34" y="613.70" width="2.41" height="1.57" fill="#004d66"/><rect x="305.82" y="627.38" width="2.41" height="1.57" fill="#e6e699"/><rect x="348.30" y="616.74" width="2.41" height="1.57" fill="#bfbf00"/><rect x="350.66" y="616.74" width="2.41" height="1.57" fill="#6ba300"/><rect x="355.38" y="628.90" width="2.41" height="1.57" fill="#e6e699"/><rect x="343.58" y="639.54" width="2.41" height="1.57" fill="#008000"/><rect x="338.86" y="628.90" width="2.41" height="1.57" fill="#bfbf00"/><rect x="341.22" y="628.90" width="2.41" height="1.57" fill="#bfbf00"/><rect x="348.30" y="631.94" width="2.41" height="1.57" fill="#004d66"/><rect x="312.90" y="631.94" width="2.41" height="1.57" fill="#bfbf00"/><rect x="345.94" y="628.90" width="2.41" height="1.57" fill="#70008f"/><rect x="334.14" y="619.78" width="2.41" height="1.57" fill="#008000"/><rect x="357.74" y="633.46" width="2.41" height="1.57" fill="#004d66"/><rect x="341.22" y="616.74" width="2.41" height="1.57" fill="#6ba300"/><rect x="312.90" y="598.50" width="2.41" height="1.57" fill="#bfbf00"/><rect x="343.58" y="601.54" width="2.41" height="1.57" fill="#bfbf00"/><rect x="331.78" y="604.58" width="2.41" height="1.57" fill="#bfbf00"/><rect x="331.78" y="609.14" width="2.41" height="1.57" fill="#bfbf00"/><rect x="331.78" y="610.66" width="2.41" height="1.57" fill="#bfbf00"/><rect x="305.82" y="612.18" width="2.41" height="1.57" fill="#008000"/><rect x="303.46" y="613.70" width="2.41" height="1.57" fill="#bfbf00"/><rect x="298.74" y="615.22" width="2.41" height="1.57" fill="#e6e699"/><rect x="312.90" y="610.66" width="2.41" height="1.57" fill="#008000"/><rect x="322.34" y="610.66" width="2.41" height="1.57" fill="#008000"/><rect x="324.70" y="610.66" width="2.41" height="1.57" fill="#008000"/><rect x="336.50" y="613.70" width="2.41" height="1.57" fill="#bfbf00"/><rect x="338.86" y="613.70" width="2.41" height="1.57" fill="#008000"/><rect x="345.94" y="610.66" width="2.41" height="1.57" fill="#008000"/><rect x="350.66" y="615.22" width="2.41" height="1.57" fill="#6ba300"/><rect x="355.38" y="615.22" width="2.41" height="1.57" fill="#008000"/><rect x="338.86" y="616.74" width="2.41" height="1.57" fill="#008000"/><rect x="345.94" y="619.78" width="2.41" height="1.57" fill="#004d66"/><rect x="353.02" y="619.78" width="2.41" height="1.57" fill="#bfbf00"/><rect x="360.10" y="618.26" width="2.41" height="1.57" fill="#008000"/><rect x="362.46" y="619.78" width="2.41" height="1.57" fill="#6ba300"/><rect x="374.26" y="616.74" width="2.41" height="1.57" fill="#008000"/><rect x="310.54" y="619.78" width="2.41" height="1.57" fill="#6ba300"/><rect x="312.90" y="619.78" width="2.41" height="1.57" fill="#6ba300"/><rect x="322.34" y="618.26" width="2.41" height="1.57" fill="#bfbf00"/><rect x="324.70" y="619.78" width="2.41" height="1.57" fill="#e6e699"/><rect x="294.02" y="622.82" width="2.41" height="1.57" fill="#bfbf00"/><rect x="301.10" y="621.30" width="2.41" height="1.57" fill="#bfbf00"/><rect x="298.74" y="624.34" width="2.41" height="1.57" fill="#008000"/><rect x="284.58" y="625.86" width="2.41" height="1.57" fill="#bfbf00"/><rect x="286.94" y="625.86" width="2.41" height="1.57" fill="#bfbf00"/><rect x="296.38" y="627.38" width="2.41" height="1.57" fill="#bfbf00"/><rect x="312.90" y="625.86" width="2.41" height="1.57" fill="#008000"/><rect x="322.34" y="624.34" width="2.41" height="1.57" fill="#008000"/><rect x="319.98" y="627.38" width="2.41" height="1.57" fill="#008000"/><rect x="327.06" y="625.86" width="2.41" height="1.57" fill="#008000"/><rect x="327.06" y="627.38" width="2.41" height="1.57" fill="#008000"/><rect x="329.42" y="622.82" width="2.41" height="1.57" fill="#6ba300"/><rect x="331.78" y="622.82" width="2.41" height="1.57" fill="#008000"/><rect x="334.14" y="621.30" width="2.41" height="1.57" fill="#bfbf00"/><rect x="336.50" y="624.34" width="2.41" height="1.57" fill="#6ba300"/><rect x="338.86" y="624.34" width="2.41" height="1.57" fill="#bfbf00"/><rect x="341.22" y="622.82" width="2.41" height="1.57" fill="#6ba300"/><rect x="308.18" y="631.94" width="2.41" height="1.57" fill="#008000"/><rect x="298.74" y="633.46" width="2.41" height="1.57" fill="#008000"/><rect x="298.74" y="634.98" width="2.41" height="1.57" fill="#6ba300"/><rect x="324.70" y="630.42" width="2.41" height="1.57" fill="#008000"/><rect x="327.06" y="628.90" width="2.41" height="1.57" fill="#004d66"/><rect x="329.42" y="630.42" width="2.41" height="1.57" fill="#bfbf00"/><rect x="324.70" y="631.94" width="2.41" height="1.57" fill="#e6e699"/><rect x="329.42" y="633.46" width="2.41" height="1.57" fill="#008000"/><rect x="334.14" y="628.90" width="2.41" height="1.57" fill="#004d66"/><rect x="336.50" y="628.90" width="2.41" height="1.57" fill="#008000"/><rect x="334.14" y="633.46" width="2.41" height="1.57" fill="#008000"/><rect x="336.50" y="633.46" width="2.41" height="1.57" fill="#008000"/><rect x="334.14" y="634.98" width="2.41" height="1.57" fill="#6ba300"/><rect x="315.26" y="636.50" width="2.41" height="1.57" fill="#6ba300"/><rect x="312.90" y="641.06" width="2.41" height="1.57" fill="#008000"/><rect x="319.98" y="642.58" width="2.41" height="1.57" fill="#008000"/><rect x="331.78" y="641.06" width="2.41" height="1.57" fill="#bfbf00"/><rect x="336.50" y="639.54" width="2.41" height="1.57" fill="#6ba300"/><rect x="338.86" y="639.54" width="2.41" height="1.57" fill="#bfbf00"/><rect x="341.22" y="639.54" width="2.41" height="1.57" fill="#bfbf00"/><rect x="341.22" y="641.06" width="2.41" height="1.57" fill="#6ba300"/><rect x="282.22" y="638.02" width="2.41" height="1.57" fill="#bfbf00"/><rect x="296.38" y="645.62" width="2.41" height="1.57" fill="#e6e699"/><rect x="357.74" y="648.66" width="2.41" height="1.57" fill="#008000"/><rect x="345.94" y="654.74" width="2.41" height="1.57" fill="#bfbf00"/><rect x="294.02" y="671.46" width="2.41" height="1.57" fill="#bfbf00"/><rect x="294.02" y="672.98" width="2.41" height="1.57" fill="#bfbf00"/><rect x="383.70" y="625.86" width="2.41" height="1.57" fill="#bfbf00"/><rect x="393.14" y="628.90" width="2.41" height="1.57" fill="#6ba300"/><rect x="367.18" y="627.38" width="2.41" height="1.57" fill="#008000"/><rect x="367.18" y="628.90" width="2.41" height="1.57" fill="#008000"/><rect x="369.54" y="627.38" width="2.41" height="1.57" fill="#008000"/><rect x="369.54" y="628.90" width="2.41" height="1.57" fill="#008000"/><rect x="362.46" y="633.46" width="2.41" height="1.57" fill="#008000"/><rect x="364.82" y="634.98" width="2.41" height="1.57" fill="#008000"/><rect x="353.02" y="636.50" width="2.41" height="1.57" fill="#6ba300"/><rect x="355.38" y="636.50" width="2.41" height="1.57" fill="#bfbf00"/><rect x="357.74" y="634.98" width="2.41" height="1.57" fill="#008000"/><rect x="353.02" y="634.98" width="2.41" height="1.57" fill="#008000"/><rect x="357.74" y="624.34" width="2.41" height="1.57" fill="#008000"/><rect x="360.10" y="625.86" width="2.41" height="1.57" fill="#008000"/><rect x="362.46" y="625.86" width="2.41" height="1.57" fill="#008000"/><rect x="357.74" y="630.42" width="2.41" height="1.57" fill="#008000"/><rect x="355.38" y="631.94" width="2.41" height="1.57" fill="#004d66"/><rect x="355.38" y="627.38" width="2.41" height="1.57" fill="#0000ff"/><rect x="357.74" y="627.38" width="2.41" height="1.57" fill="#004d66"/><rect x="360.10" y="627.38" width="2.41" height="1.57" fill="#004d66"/><rect x="277.50" y="628.90" width="2.41" height="1.57" fill="#6ba300"/><rect x="343.58" y="622.82" width="2.41" height="1.57" fill="#0000ff"/><rect x="345.94" y="621.30" width="2.41" height="1.57" fill="#004d66"/><rect x="350.66" y="621.30" width="2.41" height="1.57" fill="#6ba300"/><rect x="353.02" y="621.30" width="2.41" height="1.57" fill="#bfbf00"/><rect x="343.58" y="624.34" width="2.41" height="1.57" fill="#004d66"/><rect x="345.94" y="624.34" width="2.41" height="1.57" fill="#004d66"/><rect x="348.30" y="624.34" width="2.41" height="1.57" fill="#004d66"/><rect x="350.66" y="624.34" width="2.41" height="1.57" fill="#6ba300"/><rect x="353.02" y="624.34" width="2.41" height="1.57" fill="#008000"/><rect x="341.22" y="625.86" width="2.41" height="1.57" fill="#6ba300"/><rect x="343.58" y="625.86" width="2.41" height="1.57" fill="#0000ff"/><rect x="345.94" y="625.86" width="2.41" height="1.57" fill="#0000ff"/><rect x="348.30" y="625.86" width="2.41" height="1.57" fill="#0000ff"/><rect x="350.66" y="625.86" width="2.41" height="1.57" fill="#0000ff"/><rect x="353.02" y="625.86" width="2.41" height="1.57" fill="#008000"/><rect x="343.58" y="627.38" width="2.41" height="1.57" fill="#0000ff"/><rect x="345.94" y="627.38" width="2.41" height="1.57" fill="#70008f"/><rect x="353.02" y="627.38" width="2.41" height="1.57" fill="#008000"/><rect x="343.58" y="628.90" width="2.41" height="1.57" fill="#004d66"/><rect x="348.30" y="628.90" width="2.41" height="1.57" fill="#ff0000"/><rect x="350.66" y="628.90" width="2.41" height="1.57" fill="#70008f"/><rect x="353.02" y="628.90" width="2.41" height="1.57" fill="#004d66"/><rect x="343.58" y="630.42" width="2.41" height="1.57" fill="#008000"/><rect x="345.94" y="630.42" width="2.41" height="1.57" fill="#0000ff"/><rect x="350.66" y="630.42" width="2.41" height="1.57" fill="#0000ff"/><rect x="353.02" y="630.42" width="2.41" height="1.57" fill="#008000"/><rect x="355.38" y="630.42" width="2.41" height="1.57" fill="#004d66"/><rect x="343.58" y="631.94" width="2.41" height="1.57" fill="#6ba300"/><rect x="345.94" y="631.94" width="2.41" height="1.57" fill="#bfbf00"/><rect x="350.66" y="631.94" width="2.41" height="1.57" fill="#008000"/><rect x="353.02" y="631.94" width="2.41" height="1.57" fill="#004d66"/><rect x="343.58" y="633.46" width="2.41" height="1.57" fill="#bfbf00"/><rect x="345.94" y="633.46" width="2.41" height="1.57" fill="#6ba300"/><rect x="350.66" y="633.46" width="2.41" height="1.57" fill="#008000"/></g><rect x="277.5" y="598.5" width="118" height="76" fill="none" stroke="#000" stroke-width="1"/><text transform="translate(32.4,636.8) rotate(-90)" font-size="12" text-anchor="middle" fill="#000">M1.background</text><text transform="translate(150.6,561.4) rotate(-90)" font-size="12" text-anchor="middle" fill="#000">M1.radius</text><text transform="translate(268.6,485.4) rotate(-90)" font-size="12" text-anchor="middle" fill="#000">M1.radius.width</text><text x="335.0" y="537.2" font-size="12" text-anchor="middle" fill="#000" >M1.scale</text><defs><linearGradient id="cbg" x1="0" y1="1" x2="0" y2="0"><stop offset="0" stop-color="#ffffff"/><stop offset="0.25" stop-color="#bfbf00"/><stop offset="0.5" stop-color="#008000"/><stop offset="0.75" stop-color="#0000ff"/><stop offset="1" stop-color="#ff0000"/></linearGradient></defs><rect x="409.5" y="474.5" width="18" height="164" fill="url(#cbg)" stroke="#000" stroke-width="1"/><path d="M427.5 494.6 h-4" stroke="#000" stroke-width="0.8"/><text x="432.6" y="500.2" font-size="12">10<tspan dy="-5.2" font-size="8.4">3</tspan></text><path d="M427.5 542.4 h-4" stroke="#000" stroke-width="0.8"/><text x="432.6" y="548.0" font-size="12">10<tspan dy="-5.2" font-size="8.4">2</tspan></text><path d="M427.5 590.4 h-4" stroke="#000" stroke-width="0.8"/><text x="432.6" y="596.0" font-size="12">10<tspan dy="-5.2" font-size="8.4">1</tspan></text><path d="M427.5 638.4 h-4" stroke="#000" stroke-width="0.8"/><text x="432.6" y="644.0" font-size="12">10<tspan dy="-5.2" font-size="8.4">0</tspan></text></g></svg></div>
<div class="tb"><svg width="250" height="32" viewBox="0 0 250 32" style="position:absolute;left:0;top:0">
<g transform="translate(3.0,4.399999999999999)">
<rect x="5.4" y="2.2" width="3.0" height="6" fill="#f7c75f" stroke="#d8a081" stroke-width="0.6"/>
<path d="M5.6 11 L12.4 4.6 L18.6 11 L18.6 23.4 L5.6 23.4 Z" fill="url(#gwall)" stroke="#8fa5ae" stroke-width="1.1"/>
<path d="M8.5 22.6 L8.5 13.4 Q8.7 11.4 12.0 11.4 Q15.3 11.4 15.5 13.4 L15.5 22.6 Z" fill="none" stroke="#ffffff" stroke-width="1.6"/>
<path d="M8.5 22.6 L8.5 13.4 Q8.7 11.4 12.0 11.4 Q15.3 11.4 15.5 13.4 L15.5 22.6 Z" fill="url(#gdoor)" stroke="#b8664a" stroke-width="0.8"/>
<path d="M1.1 12.5 L12.5 0.7 L23.0 11.4 L21.2 13.5 L12.5 5.3 L2.5 14.5 Z" fill="url(#groof)" stroke="#9a1f3c" stroke-width="0.4" stroke-linejoin="round"/>
</g>
<circle cx="46" cy="16.2" r="10.8" fill="#969696"/>
<circle cx="46" cy="16.2" r="9.9" fill="url(#gball)"/>
<path d="M51.90 13.90 L45.20 13.90 L45.20 10.20 L39.90 16.20 L45.20 22.20 L45.20 18.50 L51.90 18.50 Z" fill="#dedede" stroke="#8d8d8d" stroke-width="0.4" stroke-linejoin="round"/>
<circle cx="77" cy="16.2" r="10.8" fill="#969696"/>
<circle cx="77" cy="16.2" r="9.9" fill="url(#gball)"/>
<path d="M71.10 13.90 L77.80 13.90 L77.80 10.20 L83.10 16.20 L77.80 22.20 L77.80 18.50 L71.10 18.50 Z" fill="#c4c4c4" stroke="#8d8d8d" stroke-width="0.4" stroke-linejoin="round"/>
<rect x="108.5" y="14.65" width="14.2" height="2.7" fill="#15587c"/><rect x="114.25" y="8.9" width="2.7" height="14.2" fill="#15587c"/><path d="M126.6 16.0 L122.19999999999999 19.5 L122.19999999999999 12.5 Z" fill="#15587c"/><path d="M104.6 16.0 L109.0 12.5 L109.0 19.5 Z" fill="#15587c"/><path d="M115.6 27.0 L119.1 22.6 L112.1 22.6 Z" fill="#15587c"/><path d="M115.6 5.0 L112.1 9.4 L119.1 9.4 Z" fill="#15587c"/>
<g transform="translate(135,4.199999999999999)">
<rect x="4.6" y="9.4" width="17.0" height="12.2" fill="#fbfbff" stroke="#a3d4e0" stroke-width="1"/>
<path d="M12.9 6.4 L22.6 1.2 L24.2 3.9 L14.6 9.4 Z" fill="#f3ad62" stroke="#cf8a3d" stroke-width="0.7" stroke-linejoin="round" stroke-dasharray="1.2 0.6"/>
<circle cx="7.9" cy="12.7" r="6.8" fill="url(#gmag)" stroke="#a9d5e2" stroke-width="0.9"/>
<rect x="6.9" y="11.3" width="6.4" height="1.3" fill="#2f819c"/>
<rect x="6.9" y="13.7" width="6.4" height="1.3" fill="#3d8ca6"/>
<rect x="6.9" y="15.9" width="6.4" height="1.3" fill="#5ea3b9"/>
</g>
<g transform="translate(174.4,4.0)">
<rect x="2.6" y="3.1" width="18.8" height="18.8" rx="2.4" fill="#fafafa" stroke="#0c0c0c" stroke-width="1.15"/>
<rect x="4.4" y="5.0" width="15.2" height="3" fill="#bdbdbd" opacity="0.55"/>
<rect x="5.5" y="6.6" width="13.7" height="12.1" fill="url(#gsub)"/>
<rect x="7.8" y="8.9" width="9.4" height="7.9" rx="1.6" fill="#fdfdfd" stroke="#0c0c0c" stroke-width="1.1"/>
<rect x="8.5" y="9.5" width="8.0" height="2.4" fill="#8f8f8f"/>
<rect x="11.2" y="9.5" width="2.2" height="2.4" fill="#6f8fdc"/>
<path d="M11.9 2.3 L14.7 5.9 L9.1 5.9 Z" fill="#35d64a" stroke="#1f9a2c" stroke-width="0.4"/>
<path d="M11.9 22.6 L14.7 19.0 L9.1 19.0 Z" fill="#35d64a" stroke="#1f9a2c" stroke-width="0.4"/>
<path d="M1.9 12.3 L5.5 9.7 L5.5 14.9 Z" fill="#35d64a" stroke="#1f9a2c" stroke-width="0.4"/>
<path d="M23.1 12.3 L19.2 9.7 L19.2 14.9 Z" fill="#35d64a" stroke="#1f9a2c" stroke-width="0.4"/>
</g>
<g transform="translate(204.8,4.599999999999998)">
<path d="M2.8 0.7 L21.6 0.7 Q24.0 0.7 24.0 3.1 L24.0 20.9 L21.6 23.4 L2.8 23.4 L0.3 20.9 L0.3 3.1 Q0.3 0.7 2.8 0.7 Z" fill="url(#gsave)" stroke="#2b678c" stroke-width="0.6"/>
<rect x="4.4" y="1.2" width="15.6" height="9.0" fill="url(#gslab)"/>
<rect x="4.4" y="1.2" width="15.6" height="2.1" fill="#d97a49"/>
<rect x="8.5" y="5.3" width="9.9" height="1.1" fill="#1f4d6c"/>
<rect x="8.5" y="7.3" width="9.9" height="1.1" fill="#1f4d6c"/>
<rect x="1.9" y="3.2" width="1.3" height="1.3" fill="#eef4f8"/><rect x="21.1" y="3.2" width="1.3" height="1.3" fill="#eef4f8"/>
<rect x="6.9" y="15.8" width="10.8" height="7.0" fill="url(#gshut)"/>
<rect x="8.9" y="16.4" width="2.2" height="5.4" fill="#1b2c55"/>
</g>
</svg></div>
</div>
<div class="pane" style="left:468px;top:391px;width:467px;height:336px">
<div class="tabbar"></div><div class="strip"></div>
<div class="tab" style="width:83px"><span style="left:6.3px;transform:scaleX(0.985)"><b>Uncertainty</b></span></div>
<svg class="dd" viewBox="0 0 9 8"><rect x="0.5" y="0" width="8" height="1.6" fill="#000"/><path d="M0.3 3 L8.7 3 L4.5 7.4 Z" fill="#000"/></svg>
<div class="cv" style="width:465px;height:275px"><svg width="465" height="274" viewBox="0 0 465 274" style="position:absolute;left:0;top:0;display:block" shape-rendering="auto"><g transform="translate(-469,-419)"><defs><linearGradient id="copg" x1="0" y1="0" x2="1" y2="0"><stop offset="0" stop-color="#000000"/><stop offset="0.4" stop-color="#7e4f32"/><stop offset="0.81" stop-color="#ff9f65"/><stop offset="1" stop-color="#ffc77f"/></linearGradient><linearGradient id="tipg" x1="0" y1="0" x2="0" y2="1"><stop offset="0" stop-color="#f6a96b"/><stop offset="0.3" stop-color="#c9814f"/><stop offset="0.62" stop-color="#6e432b"/><stop offset="1" stop-color="#170e0a"/></linearGradient></defs><rect x="748.5" y="419.5" width="163" height="14" fill="url(#copg)" stroke="#000" stroke-width="1"/><text x="748.2" y="446.3" font-size="12" text-anchor="middle" fill="#000" dx="0 -0.63 0.19 -0.63 -0.63 -0.63 -0.38">0.003e6</text><text x="911.6" y="446.3" font-size="12" text-anchor="middle" fill="#000" dx="0 -0.63 -0.63 -0.38">67e3</text><rect x="527.5" y="446.5" width="164" height="100" fill="#fff"/><rect x="586.3" y="446.5" width="27.6" height="100" fill="#ffe97f"/><g shape-rendering="crispEdges"><rect x="542.2" y="542.8" width="9.4" height="3.7" fill="#170e0a"/><rect x="542.2" y="542.8" width="9.4" height="3.7" fill="url(#tipg)"/><rect x="551.3" y="544.3" width="4.2" height="2.2" fill="#170e0a"/><rect x="551.3" y="544.3" width="4.2" height="2.2" fill="url(#tipg)"/><rect x="555.3" y="541.7" width="4.6" height="4.8" fill="#170e0a"/><rect x="555.3" y="541.7" width="4.6" height="2.8" fill="url(#tipg)"/><rect x="559.6" y="543.7" width="5.0" height="2.8" fill="#170e0a"/><rect x="559.6" y="543.7" width="5.0" height="2.8" fill="url(#tipg)"/><rect x="564.4" y="542.6" width="4.2" height="3.9" fill="#170e0a"/><rect x="564.4" y="542.6" width="4.2" height="3.2" fill="url(#tipg)"/><rect x="568.3" y="542.1" width="5.0" height="4.4" fill="#170e0a"/><rect x="568.3" y="542.1" width="5.0" height="3.2" fill="url(#tipg)"/><rect x="573.1" y="541.5" width="4.2" height="5.0" fill="#170e0a"/><rect x="573.1" y="541.5" width="4.2" height="3.2" fill="url(#tipg)"/><rect x="577.0" y="530.6" width="5.0" height="15.9" fill="#170e0a"/><rect x="577.0" y="530.6" width="5.0" height="2.8" fill="url(#tipg)"/><rect x="581.8" y="514.9" width="4.6" height="31.6" fill="#170e0a"/><rect x="581.8" y="514.9" width="4.6" height="3.2" fill="url(#tipg)"/><rect x="586.2" y="505.6" width="4.6" height="40.9" fill="#170e0a"/><rect x="586.2" y="505.6" width="4.6" height="2.3" fill="url(#tipg)"/><rect x="590.5" y="469.2" width="5.0" height="77.3" fill="#170e0a"/><rect x="590.5" y="469.2" width="5.0" height="2.3" fill="url(#tipg)"/><rect x="595.3" y="451.8" width="4.6" height="94.7" fill="#170e0a"/><rect x="599.7" y="528.0" width="4.6" height="18.5" fill="#170e0a"/><rect x="604.0" y="487.7" width="4.6" height="58.8" fill="#170e0a"/><rect x="604.0" y="487.7" width="4.6" height="3.9" fill="url(#tipg)"/><rect x="608.4" y="517.1" width="5.3" height="29.4" fill="#170e0a"/><rect x="608.4" y="517.1" width="5.3" height="3.2" fill="url(#tipg)"/><rect x="613.4" y="533.9" width="4.6" height="12.6" fill="#170e0a"/><rect x="613.4" y="533.9" width="4.6" height="2.3" fill="url(#tipg)"/><rect x="617.7" y="534.5" width="3.9" height="12.0" fill="#170e0a"/><rect x="621.4" y="531.7" width="5.3" height="14.8" fill="#170e0a"/><rect x="621.4" y="531.7" width="5.3" height="2.0" fill="url(#tipg)"/><rect x="626.4" y="538.9" width="4.6" height="7.6" fill="#170e0a"/><rect x="626.4" y="538.9" width="4.6" height="3.2" fill="url(#tipg)"/><rect x="630.8" y="543.0" width="5.7" height="3.5" fill="#170e0a"/><rect x="630.8" y="543.0" width="5.7" height="3.5" fill="url(#tipg)"/><rect x="636.2" y="543.9" width="9.0" height="2.6" fill="#170e0a"/><rect x="636.2" y="543.9" width="9.0" height="2.6" fill="url(#tipg)"/><rect x="644.9" y="545.0" width="4.6" height="1.5" fill="#170e0a"/><rect x="644.9" y="545.0" width="4.6" height="1.5" fill="url(#tipg)"/><rect x="649.3" y="542.6" width="3.5" height="3.9" fill="#170e0a"/><rect x="649.3" y="542.6" width="3.5" height="2.8" fill="url(#tipg)"/><rect x="652.5" y="545.0" width="4.6" height="1.5" fill="#170e0a"/><rect x="652.5" y="545.0" width="4.6" height="1.5" fill="url(#tipg)"/><rect x="656.9" y="543.2" width="4.6" height="3.3" fill="#170e0a"/><rect x="656.9" y="543.2" width="4.6" height="3.2" fill="url(#tipg)"/><rect x="661.3" y="544.3" width="5.7" height="2.2" fill="#170e0a"/><rect x="661.3" y="544.3" width="5.7" height="2.2" fill="url(#tipg)"/><rect x="666.7" y="544.3" width="9.0" height="2.2" fill="#170e0a"/><rect x="666.7" y="544.3" width="9.0" height="2.2" fill="url(#tipg)"/></g><rect x="527.0" y="448.1" width="94.4" height="18.6" fill="#ffff00" fill-opacity="0.27"/><text x="527.4" y="460.5" font-size="12" text-anchor="start" fill="#000" >M1.background</text><polyline points="542.0,545.8 597.6,545.8 597.2,451.6 601.2,452.2 606.2,545.8 676.0,545.8" fill="none" stroke="#138c13" stroke-width="1.1"/><text x="597.0" y="461.0" font-size="10.5" text-anchor="start" fill="#138c13" class="g" >E</text><rect x="527.5" y="446.5" width="164" height="100" fill="none" stroke="#000" stroke-width="1"/><path d="M542.6 546.5 v-4 M542.6 446.5 v4 M586.3 546.5 v-4 M586.3 446.5 v4 M596.3 546.5 v-4 M596.3 446.5 v4 M613.9 546.5 v-4 M613.9 446.5 v4 M675.4 546.5 v-4 M675.4 446.5 v4 " stroke="#000" stroke-width="0.8" fill="none"/><path d="M527.5 463.2 h4 M691.5 463.2 h-4 M527.5 479.9 h4 M691.5 479.9 h-4 M527.5 496.5 h4 M691.5 496.5 h-4 M527.5 513.2 h4 M691.5 513.2 h-4 M527.5 529.8 h4 M691.5 529.8 h-4 " stroke="#000" stroke-width="0.8" fill="none"/><text x="543.0" y="559.7" font-size="12" text-anchor="middle" fill="#000" dx="0 -0.63 -0.63 -0.38 -0.33">55e-3</text><text x="586.6" y="559.7" font-size="12" text-anchor="middle" fill="#000" dx="0 -0.63 -0.63 -0.38 -0.33">59e-3</text><text x="596.6" y="559.7" font-size="12" text-anchor="middle" fill="#000" dx="0 -0.63 -0.63 -0.38 -0.33">60e-3</text><text x="613.9" y="559.7" font-size="12" text-anchor="middle" fill="#000" dx="0 -0.63 -0.63 -0.38 -0.33">61e-3</text><text x="675.6" y="559.7" font-size="12" text-anchor="middle" fill="#000" dx="0 -0.63 -0.63 -0.38 -0.33">67e-3</text><rect x="724.5" y="446.5" width="163" height="100" fill="#fff"/><rect x="738.9" y="446.5" width="77.1" height="100" fill="#ffe97f"/><g shape-rendering="crispEdges"><rect x="730.9" y="450.6" width="5.4" height="95.9" fill="#170e0a"/><rect x="736.1" y="456.0" width="5.4" height="90.5" fill="#170e0a"/><rect x="736.1" y="456.0" width="5.4" height="6.6" fill="url(#tipg)"/><rect x="741.2" y="467.4" width="4.1" height="79.1" fill="#170e0a"/><rect x="745.1" y="464.8" width="5.4" height="81.7" fill="#170e0a"/><rect x="745.1" y="464.8" width="5.4" height="5.3" fill="url(#tipg)"/><rect x="750.3" y="498.3" width="4.9" height="48.2" fill="#170e0a"/><rect x="750.3" y="498.3" width="4.9" height="14.7" fill="url(#tipg)"/><rect x="754.9" y="480.3" width="5.9" height="66.2" fill="#170e0a"/><rect x="754.9" y="480.3" width="5.9" height="14.7" fill="url(#tipg)"/><rect x="760.6" y="495.7" width="4.6" height="50.8" fill="#170e0a"/><rect x="760.6" y="495.7" width="4.6" height="5.3" fill="url(#tipg)"/><rect x="764.9" y="482.8" width="5.4" height="63.7" fill="#170e0a"/><rect x="764.9" y="482.8" width="5.4" height="3.9" fill="url(#tipg)"/><rect x="770.1" y="489.3" width="5.4" height="57.2" fill="#170e0a"/><rect x="770.1" y="489.3" width="5.4" height="6.6" fill="url(#tipg)"/><rect x="775.3" y="508.6" width="4.9" height="37.9" fill="#170e0a"/><rect x="775.3" y="508.6" width="4.9" height="25.5" fill="url(#tipg)"/><rect x="779.9" y="468.7" width="5.4" height="77.8" fill="#170e0a"/><rect x="779.9" y="468.7" width="5.4" height="8.0" fill="url(#tipg)"/><rect x="785.1" y="472.5" width="5.4" height="74.0" fill="#170e0a"/><rect x="785.1" y="472.5" width="5.4" height="14.7" fill="url(#tipg)"/><rect x="790.2" y="526.7" width="4.9" height="19.8" fill="#170e0a"/><rect x="794.8" y="507.3" width="5.1" height="39.2" fill="#170e0a"/><rect x="799.7" y="515.1" width="4.9" height="31.4" fill="#170e0a"/><rect x="799.7" y="515.1" width="4.9" height="9.3" fill="url(#tipg)"/><rect x="804.4" y="503.5" width="5.4" height="43.0" fill="#170e0a"/><rect x="809.5" y="525.4" width="5.4" height="21.1" fill="#170e0a"/><rect x="809.5" y="525.4" width="5.4" height="8.0" fill="url(#tipg)"/><rect x="814.7" y="539.5" width="4.6" height="7.0" fill="#170e0a"/><rect x="814.7" y="539.5" width="4.6" height="7.0" fill="url(#tipg)"/><rect x="819.1" y="497.5" width="5.7" height="49.0" fill="#170e0a"/><rect x="819.1" y="497.5" width="5.7" height="5.3" fill="url(#tipg)"/><rect x="824.5" y="537.0" width="5.1" height="9.5" fill="#170e0a"/><rect x="829.4" y="544.2" width="5.4" height="2.3" fill="#170e0a"/><rect x="849.0" y="527.4" width="5.4" height="19.1" fill="#170e0a"/><rect x="854.1" y="525.4" width="4.6" height="21.1" fill="#170e0a"/><rect x="858.5" y="538.3" width="5.4" height="8.2" fill="#170e0a"/><rect x="863.7" y="524.6" width="10.6" height="21.9" fill="#170e0a"/><rect x="874.0" y="539.0" width="5.4" height="7.5" fill="#170e0a"/></g><rect x="722.7" y="448.1" width="61.4" height="18.6" fill="#ffff00" fill-opacity="0.27"/><text x="723.1" y="460.5" font-size="12" text-anchor="start" fill="#000" >M1.radius</text><path d="M770.9 451 V463.5" stroke="#138c13" stroke-width="1.1"/><text x="775.6" y="461.0" font-size="10.5" text-anchor="start" fill="#138c13" class="g" >E</text><text x="864.0" y="461.8" font-size="12" text-anchor="start" fill="#138c13" class="g" >&gt;*</text><rect x="724.5" y="446.5" width="163" height="100" fill="none" stroke="#000" stroke-width="1"/><path d="M730.5 546.5 v-4 M730.5 446.5 v4 M770.9 546.5 v-4 M770.9 446.5 v4 M879.0 546.5 v-4 M879.0 446.5 v4 " stroke="#000" stroke-width="0.8" fill="none"/><path d="M724.5 463.0 h4 M887.5 463.0 h-4 M724.5 479.8 h4 M887.5 479.8 h-4 M724.5 496.4 h4 M887.5 496.4 h-4 M724.5 513.1 h4 M887.5 513.1 h-4 M724.5 529.7 h4 M887.5 529.7 h-4 " stroke="#000" stroke-width="0.8" fill="none"/><text x="731.0" y="559.7" font-size="12" text-anchor="middle" fill="#000" dx="0 -0.63 0.19 -0.63 -0.63 -0.38">0.05e3</text><text x="771.2" y="559.7" font-size="12" text-anchor="middle" fill="#000" dx="0 -0.63 0.19 -0.63 -0.63 -0.38">0.28e3</text><text x="879.0" y="559.7" font-size="12" text-anchor="middle" fill="#000" dx="0 -0.63 0.19 -0.63 -0.63 -0.38">0.95e3</text><rect x="527.5" y="566.5" width="164" height="100" fill="#fff"/><rect x="538.6" y="566.5" width="62.2" height="100" fill="#ffe97f"/><g shape-rendering="crispEdges"><rect x="532.9" y="596.5" width="5.6" height="70.0" fill="#170e0a"/><rect x="532.9" y="596.5" width="5.6" height="3.9" fill="url(#tipg)"/><rect x="538.2" y="573.2" width="5.6" height="93.3" fill="#170e0a"/><rect x="543.5" y="588.0" width="5.3" height="78.5" fill="#170e0a"/><rect x="543.5" y="588.0" width="5.3" height="9.3" fill="url(#tipg)"/><rect x="548.6" y="623.0" width="5.1" height="43.5" fill="#170e0a"/><rect x="548.6" y="623.0" width="5.1" height="6.6" fill="url(#tipg)"/><rect x="553.5" y="624.7" width="5.6" height="41.8" fill="#170e0a"/><rect x="558.8" y="637.9" width="4.9" height="28.6" fill="#170e0a"/><rect x="558.8" y="637.9" width="4.9" height="9.3" fill="url(#tipg)"/><rect x="563.4" y="640.0" width="5.6" height="26.5" fill="#170e0a"/><rect x="563.4" y="640.0" width="5.6" height="3.2" fill="url(#tipg)"/><rect x="568.7" y="652.7" width="4.7" height="13.8" fill="#170e0a"/><rect x="573.2" y="643.8" width="5.6" height="22.7" fill="#170e0a"/><rect x="573.2" y="643.8" width="5.6" height="5.3" fill="url(#tipg)"/><rect x="578.5" y="660.6" width="4.9" height="5.9" fill="#170e0a"/><rect x="578.5" y="660.6" width="4.9" height="5.9" fill="url(#tipg)"/><rect x="583.2" y="659.1" width="5.6" height="7.4" fill="#170e0a"/><rect x="583.2" y="659.1" width="5.6" height="3.9" fill="url(#tipg)"/><rect x="588.5" y="642.7" width="5.6" height="23.8" fill="#170e0a"/><rect x="593.8" y="652.7" width="5.1" height="13.8" fill="#170e0a"/><rect x="593.8" y="652.7" width="5.1" height="3.9" fill="url(#tipg)"/><rect x="598.7" y="655.9" width="5.3" height="10.6" fill="#170e0a"/><rect x="598.7" y="655.9" width="5.3" height="4.6" fill="url(#tipg)"/><rect x="603.7" y="664.8" width="4.5" height="1.7" fill="#170e0a"/><rect x="603.7" y="664.8" width="4.5" height="1.7" fill="url(#tipg)"/><rect x="608.0" y="652.7" width="5.8" height="13.8" fill="#170e0a"/><rect x="613.5" y="653.4" width="5.6" height="13.1" fill="#170e0a"/><rect x="628.3" y="639.6" width="6.6" height="26.9" fill="#170e0a"/><rect x="628.3" y="639.6" width="6.6" height="5.9" fill="url(#tipg)"/><rect x="639.4" y="665.7" width="5.6" height="0.8" fill="#170e0a"/><rect x="639.4" y="665.7" width="5.6" height="0.8" fill="url(#tipg)"/><rect x="669.1" y="662.7" width="6.0" height="3.8" fill="#170e0a"/><rect x="679.2" y="651.7" width="6.0" height="14.8" fill="#170e0a"/></g><rect x="527.1" y="568.1" width="98.9" height="18.6" fill="#ffff00" fill-opacity="0.27"/><text x="527.5" y="580.5" font-size="12" text-anchor="start" fill="#000" >M1.radius.width</text><text x="534.6" y="580.0" font-size="11" text-anchor="start" fill="#138c13" class="g" >&lt;*</text><path d="M551.6 571.5 V583.5" stroke="#138c13" stroke-width="1.1"/><text x="565.8" y="580.6" font-size="10.5" text-anchor="start" fill="#138c13" class="g" >E</text><rect x="527.5" y="566.5" width="164" height="100" fill="none" stroke="#000" stroke-width="1"/><path d="M538.6 666.5 v-4 M538.6 566.5 v4 M551.4 666.5 v-4 M551.4 566.5 v4 M684.5 666.5 v-4 M684.5 566.5 v4 " stroke="#000" stroke-width="0.8" fill="none"/><path d="M527.5 586.5 h4 M691.5 586.5 h-4 M527.5 606.3 h4 M691.5 606.3 h-4 M527.5 626.2 h4 M691.5 626.2 h-4 M527.5 646.3 h4 M691.5 646.3 h-4 " stroke="#000" stroke-width="0.8" fill="none"/><text x="534.9" y="679.7" font-size="12" text-anchor="middle" fill="#000" dx="0 -0.63 0.19 -0.63 -0.63 -0.63 -0.38">0.001e3</text><text x="551.0" y="679.7" font-size="12" text-anchor="middle" fill="#000" dx="0 -0.63 0.19 -0.63 -0.63 -0.63 -0.38">0.004e3</text><text x="685.0" y="679.7" font-size="12" text-anchor="middle" fill="#000" dx="0 -0.63">29</text><rect x="724.5" y="566.5" width="163" height="100" fill="#fff"/><rect x="815.2" y="566.5" width="23.5" height="100" fill="#ffe97f"/><g shape-rendering="crispEdges"><rect x="727.1" y="663.1" width="6.2" height="3.4" fill="#170e0a"/><rect x="727.1" y="663.1" width="6.2" height="3.1" fill="url(#tipg)"/><rect x="733.0" y="665.2" width="4.6" height="1.3" fill="#170e0a"/><rect x="733.0" y="665.2" width="4.6" height="1.3" fill="url(#tipg)"/><rect x="737.4" y="663.9" width="6.2" height="2.6" fill="#170e0a"/><rect x="737.4" y="663.9" width="6.2" height="2.6" fill="url(#tipg)"/><rect x="743.3" y="665.2" width="3.3" height="1.3" fill="#170e0a"/><rect x="746.4" y="663.9" width="10.6" height="2.6" fill="#170e0a"/><rect x="756.7" y="664.7" width="8.0" height="1.8" fill="#170e0a"/><rect x="756.7" y="664.7" width="8.0" height="1.8" fill="url(#tipg)"/><rect x="764.4" y="663.9" width="5.9" height="2.6" fill="#170e0a"/><rect x="764.4" y="663.9" width="5.9" height="2.6" fill="url(#tipg)"/><rect x="770.1" y="663.4" width="4.9" height="3.1" fill="#170e0a"/><rect x="774.7" y="662.6" width="5.4" height="3.9" fill="#170e0a"/><rect x="774.7" y="662.6" width="5.4" height="2.3" fill="url(#tipg)"/><rect x="779.9" y="661.9" width="5.4" height="4.6" fill="#170e0a"/><rect x="779.9" y="661.9" width="5.4" height="2.8" fill="url(#tipg)"/><rect x="785.1" y="665.2" width="4.1" height="1.3" fill="#170e0a"/><rect x="788.9" y="662.9" width="6.2" height="3.6" fill="#170e0a"/><rect x="788.9" y="662.9" width="6.2" height="2.5" fill="url(#tipg)"/><rect x="794.8" y="663.9" width="4.6" height="2.6" fill="#170e0a"/><rect x="794.8" y="663.9" width="4.6" height="2.5" fill="url(#tipg)"/><rect x="799.2" y="665.7" width="4.1" height="0.8" fill="#170e0a"/><rect x="803.1" y="659.5" width="5.4" height="7.0" fill="#170e0a"/><rect x="808.2" y="649.7" width="4.9" height="16.8" fill="#170e0a"/><rect x="812.9" y="648.5" width="4.6" height="18.0" fill="#170e0a"/><rect x="812.9" y="648.5" width="4.6" height="2.0" fill="url(#tipg)"/><rect x="817.3" y="629.1" width="5.4" height="37.4" fill="#170e0a"/><rect x="817.3" y="629.1" width="5.4" height="2.0" fill="url(#tipg)"/><rect x="822.4" y="576.8" width="5.4" height="89.7" fill="#170e0a"/><rect x="827.6" y="596.9" width="5.4" height="69.6" fill="#170e0a"/><rect x="832.7" y="609.8" width="4.1" height="56.7" fill="#170e0a"/><rect x="836.6" y="640.0" width="5.4" height="26.5" fill="#170e0a"/><rect x="841.8" y="650.5" width="5.4" height="16.0" fill="#170e0a"/><rect x="846.9" y="660.1" width="4.1" height="6.4" fill="#170e0a"/><rect x="850.8" y="662.6" width="5.4" height="3.9" fill="#170e0a"/><rect x="855.9" y="664.7" width="4.1" height="1.8" fill="#170e0a"/><rect x="859.8" y="661.3" width="6.7" height="5.2" fill="#170e0a"/><rect x="859.8" y="661.3" width="6.7" height="3.4" fill="url(#tipg)"/><rect x="866.2" y="663.4" width="4.1" height="3.1" fill="#170e0a"/></g><rect x="723.1" y="568.1" width="55.4" height="18.6" fill="#ffff00" fill-opacity="0.27"/><text x="723.5" y="580.5" font-size="12" text-anchor="start" fill="#000" >M1.scale</text><polyline points="727.0,665.6 848.4,665.6 853.9,572.0 858.6,665.6 870.0,665.6" fill="none" stroke="#138c13" stroke-width="1.1"/><text x="820.2" y="581.0" font-size="10.5" text-anchor="start" fill="#138c13" class="g" >E</text><path d="M826.6 571.8 V581.2" stroke="#138c13" stroke-width="1.1"/><text x="850.8" y="581.6" font-size="12" text-anchor="start" fill="#138c13" class="g" >*</text><rect x="724.5" y="566.5" width="163" height="100" fill="none" stroke="#000" stroke-width="1"/><path d="M728.4 666.5 v-4 M728.4 566.5 v4 M815.2 666.5 v-4 M815.2 566.5 v4 M827.0 666.5 v-4 M827.0 566.5 v4 M838.7 666.5 v-4 M838.7 566.5 v4 M870.0 666.5 v-4 M870.0 566.5 v4 " stroke="#000" stroke-width="0.8" fill="none"/><path d="M724.5 580.1 h4 M887.5 580.1 h-4 M724.5 594.2 h4 M887.5 594.2 h-4 M724.5 608.5 h4 M887.5 608.5 h-4 M724.5 622.9 h4 M887.5 622.9 h-4 M724.5 637.2 h4 M887.5 637.2 h-4 M724.5 651.5 h4 M887.5 651.5 h-4 " stroke="#000" stroke-width="0.8" fill="none"/><text x="728.4" y="679.7" font-size="12" text-anchor="middle" fill="#000" dx="0 -0.63 0.19 -0.63 -0.63">0.162</text><text x="815.2" y="679.7" font-size="12" text-anchor="middle" fill="#000" dx="0 -0.63 0.19 -0.63 -0.63">0.194</text><text x="827.0" y="679.7" font-size="12" text-anchor="middle" fill="#000" dx="0 -0.63 0.19 -0.63 -0.63">0.198</text><text x="838.7" y="679.7" font-size="12" text-anchor="middle" fill="#000" dx="0 -0.63 0.19 -0.63 -0.63">0.202</text><text x="870.0" y="679.7" font-size="12" text-anchor="middle" fill="#000" dx="0 -0.63 0.19 -0.63 -0.63">0.214</text></g></svg></div>
<div class="tb"><svg width="250" height="32" viewBox="0 0 250 32" style="position:absolute;left:0;top:0">
<g transform="translate(3.0,4.399999999999999)">
<rect x="5.4" y="2.2" width="3.0" height="6" fill="#f7c75f" stroke="#d8a081" stroke-width="0.6"/>
<path d="M5.6 11 L12.4 4.6 L18.6 11 L18.6 23.4 L5.6 23.4 Z" fill="url(#gwall)" stroke="#8fa5ae" stroke-width="1.1"/>
<path d="M8.5 22.6 L8.5 13.4 Q8.7 11.4 12.0 11.4 Q15.3 11.4 15.5 13.4 L15.5 22.6 Z" fill="none" stroke="#ffffff" stroke-width="1.6"/>
<path d="M8.5 22.6 L8.5 13.4 Q8.7 11.4 12.0 11.4 Q15.3 11.4 15.5 13.4 L15.5 22.6 Z" fill="url(#gdoor)" stroke="#b8664a" stroke-width="0.8"/>
<path d="M1.1 12.5 L12.5 0.7 L23.0 11.4 L21.2 13.5 L12.5 5.3 L2.5 14.5 Z" fill="url(#groof)" stroke="#9a1f3c" stroke-width="0.4" stroke-linejoin="round"/>
</g>
<circle cx="46" cy="16.2" r="10.8" fill="#969696"/>
<circle cx="46" cy="16.2" r="9.9" fill="url(#gball)"/>
<path d="M51.90 13.90 L45.20 13.90 L45.20 10.20 L39.90 16.20 L45.20 22.20 L45.20 18.50 L51.90 18.50 Z" fill="#dedede" stroke="#8d8d8d" stroke-width="0.4" stroke-linejoin="round"/>
<circle cx="77" cy="16.2" r="10.8" fill="#969696"/>
<circle cx="77" cy="16.2" r="9.9" fill="url(#gball)"/>
<path d="M71.10 13.90 L77.80 13.90 L77.80 10.20 L83.10 16.20 L77.80 22.20 L77.80 18.50 L71.10 18.50 Z" fill="#c4c4c4" stroke="#8d8d8d" stroke-width="0.4" stroke-linejoin="round"/>
<rect x="108.5" y="14.65" width="14.2" height="2.7" fill="#15587c"/><rect x="114.25" y="8.9" width="2.7" height="14.2" fill="#15587c"/><path d="M126.6 16.0 L122.19999999999999 19.5 L122.19999999999999 12.5 Z" fill="#15587c"/><path d="M104.6 16.0 L109.0 12.5 L109.0 19.5 Z" fill="#15587c"/><path d="M115.6 27.0 L119.1 22.6 L112.1 22.6 Z" fill="#15587c"/><path d="M115.6 5.0 L112.1 9.4 L119.1 9.4 Z" fill="#15587c"/>
<g transform="translate(135,4.199999999999999)">
<rect x="4.6" y="9.4" width="17.0" height="12.2" fill="#fbfbff" stroke="#a3d4e0" stroke-width="1"/>
<path d="M12.9 6.4 L22.6 1.2 L24.2 3.9 L14.6 9.4 Z" fill="#f3ad62" stroke="#cf8a3d" stroke-width="0.7" stroke-linejoin="round" stroke-dasharray="1.2 0.6"/>
<circle cx="7.9" cy="12.7" r="6.8" fill="url(#gmag)" stroke="#a9d5e2" stroke-width="0.9"/>
<rect x="6.9" y="11.3" width="6.4" height="1.3" fill="#2f819c"/>
<rect x="6.9" y="13.7" width="6.4" height="1.3" fill="#3d8ca6"/>
<rect x="6.9" y="15.9" width="6.4" height="1.3" fill="#5ea3b9"/>
</g>
<g transform="translate(174.4,4.0)">
<rect x="2.6" y="3.1" width="18.8" height="18.8" rx="2.4" fill="#fafafa" stroke="#0c0c0c" stroke-width="1.15"/>
<rect x="4.4" y="5.0" width="15.2" height="3" fill="#bdbdbd" opacity="0.55"/>
<rect x="5.5" y="6.6" width="13.7" height="12.1" fill="url(#gsub)"/>
<rect x="7.8" y="8.9" width="9.4" height="7.9" rx="1.6" fill="#fdfdfd" stroke="#0c0c0c" stroke-width="1.1"/>
<rect x="8.5" y="9.5" width="8.0" height="2.4" fill="#8f8f8f"/>
<rect x="11.2" y="9.5" width="2.2" height="2.4" fill="#6f8fdc"/>
<path d="M11.9 2.3 L14.7 5.9 L9.1 5.9 Z" fill="#35d64a" stroke="#1f9a2c" stroke-width="0.4"/>
<path d="M11.9 22.6 L14.7 19.0 L9.1 19.0 Z" fill="#35d64a" stroke="#1f9a2c" stroke-width="0.4"/>
<path d="M1.9 12.3 L5.5 9.7 L5.5 14.9 Z" fill="#35d64a" stroke="#1f9a2c" stroke-width="0.4"/>
<path d="M23.1 12.3 L19.2 9.7 L19.2 14.9 Z" fill="#35d64a" stroke="#1f9a2c" stroke-width="0.4"/>
</g>
<g transform="translate(204.8,4.599999999999998)">
<path d="M2.8 0.7 L21.6 0.7 Q24.0 0.7 24.0 3.1 L24.0 20.9 L21.6 23.4 L2.8 23.4 L0.3 20.9 L0.3 3.1 Q0.3 0.7 2.8 0.7 Z" fill="url(#gsave)" stroke="#2b678c" stroke-width="0.6"/>
<rect x="4.4" y="1.2" width="15.6" height="9.0" fill="url(#gslab)"/>
<rect x="4.4" y="1.2" width="15.6" height="2.1" fill="#d97a49"/>
<rect x="8.5" y="5.3" width="9.9" height="1.1" fill="#1f4d6c"/>
<rect x="8.5" y="7.3" width="9.9" height="1.1" fill="#1f4d6c"/>
<rect x="1.9" y="3.2" width="1.3" height="1.3" fill="#eef4f8"/><rect x="21.1" y="3.2" width="1.3" height="1.3" fill="#eef4f8"/>
<rect x="6.9" y="15.8" width="10.8" height="7.0" fill="url(#gshut)"/>
<rect x="8.9" y="16.4" width="2.2" height="5.4" fill="#1b2c55"/>
</g>
</svg></div>
</div>
</div></body></html>
